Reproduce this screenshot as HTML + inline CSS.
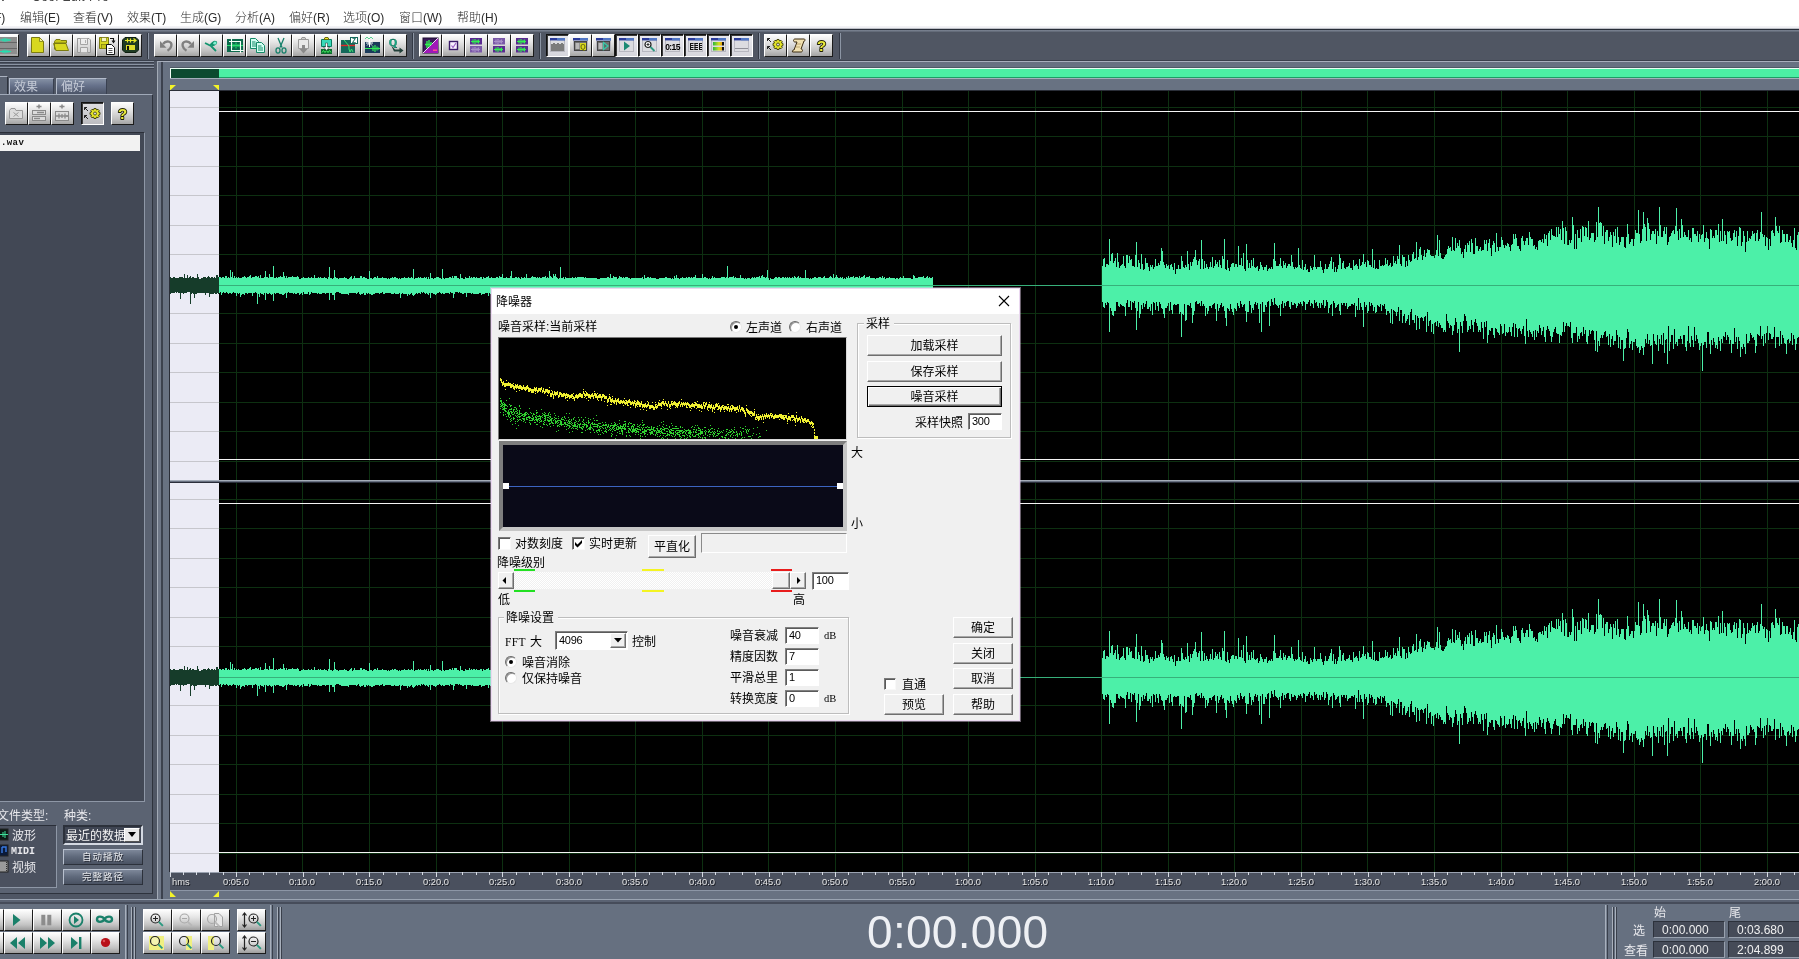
<!DOCTYPE html>
<html lang="zh-CN"><head><meta charset="utf-8"><title>Cool Edit Pro</title>
<style>
*{box-sizing:border-box;margin:0;padding:0}
html,body{width:1799px;height:959px;overflow:hidden;background:#505663}
body{position:relative;font-family:"Liberation Sans","Noto Sans CJK SC",sans-serif;font-size:12px;color:#000}
.a{position:absolute}
span,.btn,.inp,.tbox,text{will-change:transform}
#menubar{left:0;top:0;width:1799px;height:29px;background:#fff}
#menubar span{position:absolute;top:10px;font-size:12px;line-height:16px;color:#2a2a2a;white-space:nowrap;font-weight:300}
#toolbar{left:0;top:29px;width:1799px;height:32px;background:#505663;border-top:1px solid #272c37}
.tb{position:absolute;width:23px;height:23px;background:linear-gradient(180deg,#fdfdfd 0%,#e4e4e4 35%,#c2c2c2 75%,#a4a4a4 100%);border:1px solid;border-color:#fff #1c1c1c #1c1c1c #fff}
.tb.p{background:linear-gradient(180deg,#eaeaf0 0%,#d6d6dc 100%);border-color:#101010 #fff #fff #101010;box-shadow:inset 1px 1px 0 #3a3a3a}
.tb svg{position:absolute;left:0;top:0;width:21px;height:21px;will-change:transform}
.vsep{position:absolute;width:2px;border-left:1px solid #333945;border-right:1px solid #8c95a4}
.lt{color:#e8e8ec;white-space:nowrap}
#dlg{left:491px;top:288px;width:529px;height:433px;background:#f0f0f0;border:1px solid #ead8f0;box-shadow:0 0 0 1px rgba(236,214,242,.45);font-size:12px;line-height:12px}
#dlg .t{position:absolute;white-space:nowrap;font-size:12px;line-height:14px;color:#000}
.btn{position:absolute;background:#f0f0f0;border:1px solid;border-color:#fff #6e6e6e #6e6e6e #fff;box-shadow:inset -1px -1px 0 #a8a8a8;text-align:center;font-size:12px;line-height:17px;white-space:nowrap}
.inp{position:absolute;background:#fff;border:1px solid;border-color:#808080 #fff #fff #808080;box-shadow:inset 1px 1px 0 #5a5a5a;font-size:11px;line-height:13px;padding:1px 0 0 3px;white-space:nowrap;letter-spacing:-0.3px}
.grp{position:absolute;border:1px solid #bdbdbd;box-shadow:inset 1px 1px 0 #fff, 1px 1px 0 #fff}
.rad{position:absolute;width:12px;height:12px;border-radius:50%;background:#fff;border:1px solid;border-color:#6a6a6a #e8e8e8 #e8e8e8 #6a6a6a;box-shadow:inset 1px 1px 0 #9a9a9a}
.rad.on:after{content:"";position:absolute;left:3px;top:3px;width:4px;height:4px;border-radius:50%;background:#000}
.chk{position:absolute;width:13px;height:13px;background:#fff;border:1px solid;border-color:#7a7a7a #f8f8f8 #f8f8f8 #7a7a7a;box-shadow:inset 1px 1px 0 #5a5a5a}
.bb{position:absolute;width:29px;height:22px;background:linear-gradient(180deg,#fdfdfd 0%,#e6e6e6 35%,#c2c2c2 75%,#9e9e9e 100%);border:1px solid;border-color:#fff #1c1c1c #1c1c1c #fff}
.bb svg{position:absolute;left:0;top:0;width:26px;height:20px}
.tbox{position:absolute;height:17px;background:#454b58;border:1px solid;border-color:#2c313b #98a1ae #98a1ae #2c313b;color:#f0f0f0;font-size:12px;line-height:16px;padding-left:8px;white-space:nowrap}
</style></head><body>
<div class="a" id="menubar"><span style="left:0px;top:-11px;font-size:12px;color:#444">v</span><span style="left:32px;top:-11px;font-size:12px;color:#444;letter-spacing:0.5px">Cool Edit Pro</span><span style="left:-34px">文件(F)</span><span style="left:20px">编辑(E)</span><span style="left:73px">查看(V)</span><span style="left:127px">效果(T)</span><span style="left:180px">生成(G)</span><span style="left:235px">分析(A)</span><span style="left:289px">偏好(R)</span><span style="left:343px">选项(O)</span><span style="left:399px">窗口(W)</span><span style="left:457px">帮助(H)</span><div class="a" style="left:0;top:26px;width:1799px;height:3px;background:linear-gradient(180deg,#f4f4f7,#eeeef2 60%,#9a9ea8)"></div></div>
<div class="a" id="toolbar"><div class="a" style="left:0;top:0;width:1799px;height:2px;background:linear-gradient(180deg,#7e8696,#5c6371)"></div><div class="tb" style="left:-4px;top:4px"><svg viewBox="0 0 21 21"><rect x="0" y="2" width="20" height="17" fill="#8e8e8e"/><path d="M0 7.5H20M0 13.5H20" stroke="#666" stroke-width="1"/><path d="M3 5H14M6 3.5V6.5M8 3V7M10 3.5V6.5M12 4V6" stroke="#22e0b0" stroke-width="1.2"/><path d="M3 16.5H14M6 15V18M8 14.5V18.5M10 15V18M12 15.5V17.5" stroke="#22e0b0" stroke-width="1.2"/></svg></div><div class="tb" style="left:27px;top:4px"><svg viewBox="0 0 21 21"><path d="M3.5 2.5H11.5L15.5 6.5V17.5H3.5Z" fill="#d8d820" stroke="#7c7c10"/><path d="M11.5 2.5V6.5H15.5Z" fill="#f4f4a0" stroke="#7c7c10" stroke-width=".8"/></svg></div><div class="tb" style="left:50px;top:4px"><svg viewBox="0 0 21 21"><path d="M3.5 6.5L5 4.5H9L10 5.5H15.5V8H3.5Z" fill="#c8c818" stroke="#7c7c10"/><path d="M2.5 8.5H15L17.5 15.5H5Z" fill="#d8d820" stroke="#7c7c10"/><path d="M3.5 8V14L5 15.5" fill="none" stroke="#7c7c10"/></svg></div><div class="tb" style="left:73px;top:4px"><svg viewBox="0 0 21 21"><path d="M3.500 3.500H15L16.500 5V17.500H3.500Z" fill="#e6e6e6" fill-opacity=".5" stroke="#9a9a9a"/><path d="M6.500 3.500V9.500H13.500V3.500M6.500 17.500V12.500H13.500V17.500" fill="#f2f2f2" fill-opacity=".6" stroke="#a4a4a4"/><path d="M11.500 5V8" stroke="#b0b0b0"/></svg></div><div class="tb" style="left:96px;top:4px"><svg viewBox="0 0 21 21"><path d="M2.5 2.5H11.5V13.5H2.5Z" fill="#d8d820" stroke="#7c7c10"/><rect x="4.5" y="2.5" width="5" height="4" fill="#f4f4c0" stroke="#7c7c10" stroke-width=".7"/><rect x="4.5" y="9.500" width="5" height="4" fill="#c4c418" stroke="#7c7c10" stroke-width=".7"/><path d="M9.500 9.500H14.5L17.500 12.500V19.500H9.500Z" fill="#fff" stroke="#111"/><path d="M11.5 13.500H15.5M11.5 15.500H15.5M11.5 17.500H15.5" stroke="#555"/><path d="M13 3.5H16.500V7M15 5.500L16.500 7.500L18 5.500" fill="none" stroke="#111" stroke-width="1.100"/></svg></div><div class="tb" style="left:119px;top:4px"><svg viewBox="0 0 21 21"><path d="M5 2.500H16L18.500 5V15L16 17.500H5L2.500 15V5Z" fill="#1e3a22" stroke="#0e1e10"/><path d="M5 5.500H16M13.500 3.500L16 5.500L13.500 7.500M7.500 3.500V7.500M10.500 3.500V7.500" stroke="#e8e828" stroke-width="1.200" fill="none"/><rect x="6" y="10" width="9" height="5" fill="#dcdc28"/><rect x="7" y="11" width="2" height="4" fill="#111"/></svg></div><div class="tb" style="left:154px;top:4px"><svg viewBox="0 0 21 21"><g><path d="M5 6V12.700H11.500Z" fill="#808080"/><path d="M8 9C11 5 17.500 6 16.300 11C15.800 13.200 14.300 14.800 12.500 15.800" fill="none" stroke="#808080" stroke-width="2.400"/></g></svg></div><div class="tb" style="left:177px;top:4px"><svg viewBox="0 0 21 21"><g transform="translate(21,0) scale(-1,1)"><path d="M5 6V12.700H11.500Z" fill="#808080"/><path d="M8 9C11 5 17.500 6 16.300 11C15.800 13.200 14.300 14.800 12.500 15.800" fill="none" stroke="#808080" stroke-width="2.400"/></g></svg></div><div class="tb" style="left:200px;top:4px"><svg viewBox="0 0 21 21"><path d="M4 8L10 11L15 16M9 11C11 8 13 6 15 7C16 8 14 10 11 10.500" fill="none" stroke="#12946e" stroke-width="1.800"/><circle cx="14" cy="8" r="1.600" fill="#7ef0d0"/></svg></div><div class="tb" style="left:223px;top:4px"><svg viewBox="0 0 21 21"><rect x="3" y="4" width="16" height="13" fill="#0c6a4c"/><path d="M3 10.500H19M8 8V13M10 9V12M12 7.500V13.500M14 9V12M16 8.500V12.500" stroke="#28e070" stroke-width="1"/><path d="M7.500 2V15.500H20M5 6.500H16.500V18" fill="none" stroke="#f4fff8" stroke-width="1.100"/></svg></div><div class="tb" style="left:246px;top:4px"><svg viewBox="0 0 21 21"><path d="M3.5 3.5H8.5L11.5 6.5V13.5H3.5Z" fill="#d4fff2" stroke="#148a68"/><path d="M5 7H8.5M5 9H10M5 11H10" stroke="#148a68"/><path d="M9.5 7.5H14.5L17.5 10.5V17.5H9.5Z" fill="#d4fff2" stroke="#148a68"/><path d="M11 11H14.5M11 13H16M11 15H16" stroke="#148a68"/></svg></div><div class="tb" style="left:269px;top:4px"><svg viewBox="0 0 21 21"><path d="M8 3L12 12.500M14 3L10 12.500" stroke="#16806a" stroke-width="1.300" fill="none"/><ellipse cx="8" cy="15.500" rx="2" ry="2.600" fill="none" stroke="#16806a" stroke-width="1.300"/><ellipse cx="14" cy="15.500" rx="2" ry="2.600" fill="none" stroke="#16806a" stroke-width="1.300"/></svg></div><div class="tb" style="left:292px;top:4px"><svg viewBox="0 0 21 21"><path d="M5.500 4.500H15.500V13.500H5.500Z" fill="#e8e8e8" stroke="#9a9a9a"/><path d="M8 4.500L9 2.500H12L13 4.500Z" fill="#d0d0d0" stroke="#9a9a9a"/><path d="M9 10H12V14H14.500L10.500 18.500L6.500 14H9Z" fill="#8a8a8a"/></svg></div><div class="tb" style="left:315px;top:4px"><svg viewBox="0 0 21 21"><path d="M5.500 4.500H15.500V11.500H5.500Z" fill="#38d8b8" stroke="#0c7a60"/><path d="M8 4.500L9 2.500H12L13 4.500Z" fill="#e8e828" stroke="#6a6a10"/><rect x="5" y="14" width="11" height="5" fill="#0c6a2c"/><path d="M6 17.500L7.500 15.500L9 17.500L10.500 15.500L12 17.500L13.500 15.500L15 17.500" fill="none" stroke="#40f060" stroke-width="1"/><path d="M9.500 8H11.500V12H13.500L10.500 15.500L7.500 12H9.500Z" fill="#fff" stroke="#222" stroke-width=".5"/></svg></div><div class="tb" style="left:338px;top:4px"><svg viewBox="0 0 21 21"><rect x="2" y="5" width="14" height="13" fill="#14685a"/><path d="M2 10.500H16" stroke="#e02828" stroke-width="1.400"/><path d="M5 5L10 11V14L11 17L12.500 14L14 17" fill="none" stroke="#40e070" stroke-width="1"/><rect x="11.500" y="2.500" width="7" height="6" fill="#fff" stroke="#14685a"/><text x="15" y="7.800" font-size="6.500" font-weight="bold" font-family="Liberation Sans,sans-serif" text-anchor="middle" fill="#14685a">Z</text></svg></div><div class="tb" style="left:361px;top:4px"><svg viewBox="0 0 21 21"><rect x="3" y="7" width="15" height="11" fill="#1a3a5a"/><path d="M3 13.500H18M11 11V16M13 10V17M15 11.500V15.500M16.500 12.500V14.500" stroke="#30e858" stroke-width="1.200"/><path d="M7.500 4V12M4 8H11M5 5.500L10 10.500M10 5.500L5 10.500" stroke="#fff" stroke-width="1"/><path d="M3 4L5 2L7 4L9 2L11 4" fill="none" stroke="#30c878" stroke-width=".8"/></svg></div><div class="tb" style="left:384px;top:4px"><svg viewBox="0 0 21 21"><text x="8" y="10.500" font-size="11" font-weight="bold" font-family="Liberation Serif,serif" text-anchor="middle" fill="#18b088" stroke="#0c6a54" stroke-width=".4">Q</text><path d="M6 10L10 14.500H14.500V12.500L18.500 15.500L14.500 18.500V16.500H9Z" fill="#22403a"/></svg></div><div class="tb" style="left:419px;top:4px"><svg viewBox="0 0 21 21"><rect x="3" y="3" width="15" height="15" fill="#3a1a5a" stroke="#1c0c30"/><path d="M18 3V18H3Z" fill="#a018b8"/><path d="M3 18L18 3" stroke="#f0d8f8" stroke-width="1"/><path d="M5 9.500H11M7 6V13M9 5V12M11 7V10" stroke="#30f050" stroke-width="1.400"/><rect x="13" y="14.500" width="4" height="1.500" fill="#ff5090"/></svg></div><div class="tb" style="left:442px;top:4px"><svg viewBox="0 0 21 21"><rect x="6.500" y="6.500" width="8" height="8" fill="#f8f0ff" stroke="#3a1a6a" stroke-width="1.400"/><path d="M8.500 10.500L10 12.500L13 8" fill="none" stroke="#9a60c8" stroke-width="1.200"/></svg></div><div class="tb" style="left:465px;top:4px"><svg viewBox="0 0 21 21"><rect x="4" y="3" width="12" height="6.500" fill="#5a2a90"/><rect x="4" y="11" width="12" height="6.500" fill="#7a58a8"/><path d="M5 6.5h9M7 4.5v4M9 4v5M11 5v3M12.5 4.5v4" stroke="#30f050" stroke-width="1.200"/><path d="M5 14.5h9M7 12.5v4M9 12v5M11 13v3M12.5 12.5v4" stroke="#a890c8" stroke-width="1.200"/></svg></div><div class="tb" style="left:488px;top:4px"><svg viewBox="0 0 21 21"><rect x="4" y="3" width="12" height="6.500" fill="#7a58a8"/><rect x="4" y="11" width="12" height="6.500" fill="#5a2a90"/><path d="M5 6.5h9M7 4.5v4M9 4v5M11 5v3M12.5 4.5v4" stroke="#a890c8" stroke-width="1.200"/><path d="M5 14.5h9M7 12.5v4M9 12v5M11 13v3M12.5 12.5v4" stroke="#30f050" stroke-width="1.200"/></svg></div><div class="tb" style="left:511px;top:4px"><svg viewBox="0 0 21 21"><rect x="4" y="3" width="12" height="6.500" fill="#5a2a90"/><rect x="4" y="11" width="12" height="6.500" fill="#5a2a90"/><path d="M5 6.5h9M7 4.5v4M9 4v5M11 5v3M12.5 4.5v4" stroke="#30f050" stroke-width="1.200"/><path d="M5 14.5h9M7 12.5v4M9 12v5M11 13v3M12.5 12.5v4" stroke="#30f050" stroke-width="1.200"/></svg></div><div class="tb p" style="left:546px;top:4px"><svg viewBox="0 0 21 21"><rect x="3.500" y="3.500" width="14" height="13" fill="#dcdce0" stroke="#b8b8c0"/><rect x="3" y="3" width="15" height="2.400" fill="#2a3a9a"/><rect x="10" y="3" width="8" height="2.400" fill="#5a86d0" opacity=".8"/><path d="M4 16V9H6V8H8V9H10V8H12V9H14V8H16V9H17V16Z" fill="#7c7c7c"/></svg></div><div class="tb" style="left:569px;top:4px"><svg viewBox="0 0 21 21"><rect x="3.500" y="3.500" width="14" height="13" fill="#dcdce0" stroke="#b8b8c0"/><rect x="3" y="3" width="15" height="2.400" fill="#2a3a9a"/><rect x="10" y="3" width="8" height="2.400" fill="#5a86d0" opacity=".8"/><rect x="4.500" y="6.500" width="12" height="9" fill="#707070" stroke="#444"/><path d="M5.500 9H9.500M5.500 11H9.500M5.500 13H9.500" stroke="#fff" stroke-width="1.200"/><rect x="10" y="8" width="6" height="7" fill="#d8d820"/><text x="13" y="14" font-size="7" font-weight="bold" font-family="Liberation Sans,sans-serif" text-anchor="middle" fill="#6a6a10">Q</text></svg></div><div class="tb" style="left:592px;top:4px"><svg viewBox="0 0 21 21"><rect x="3.500" y="3.500" width="14" height="13" fill="#dcdce0" stroke="#b8b8c0"/><rect x="3" y="3" width="15" height="2.400" fill="#2a3a9a"/><rect x="10" y="3" width="8" height="2.400" fill="#5a86d0" opacity=".8"/><rect x="4.500" y="6.500" width="12" height="9" fill="#707070" stroke="#444"/><path d="M5.500 9H9.500M5.500 11H9.500M5.500 13H9.500" stroke="#fff" stroke-width="1.200"/><path d="M10.500 7.500L15 11L10.500 14.500Z" fill="#5a6a68" stroke="#38c8a8" stroke-width="1.200"/></svg></div><div class="tb p" style="left:615px;top:4px"><svg viewBox="0 0 21 21"><rect x="3.500" y="3.500" width="14" height="13" fill="#dcdce0" stroke="#b8b8c0"/><rect x="3" y="3" width="15" height="2.400" fill="#2a3a9a"/><rect x="10" y="3" width="8" height="2.400" fill="#5a86d0" opacity=".8"/><path d="M8 6.500L14 11L8 15.500Z" fill="#1c8a74"/></svg></div><div class="tb p" style="left:638px;top:4px"><svg viewBox="0 0 21 21"><rect x="3.500" y="3.500" width="14" height="13" fill="#dcdce0" stroke="#b8b8c0"/><rect x="3" y="3" width="15" height="2.400" fill="#2a3a9a"/><rect x="10" y="3" width="8" height="2.400" fill="#5a86d0" opacity=".8"/><circle cx="9" cy="9.500" r="3" fill="#fff" stroke="#222" stroke-width="1.200"/><path d="M7.500 9.500H10.500M9 8V11" stroke="#222" stroke-width=".9"/><path d="M11.500 12L15.500 16" stroke="#2a9a80" stroke-width="1.800"/></svg></div><div class="tb p" style="left:661px;top:4px"><svg viewBox="0 0 21 21"><rect x="3.500" y="3.500" width="14" height="13" fill="#dcdce0" stroke="#b8b8c0"/><rect x="3" y="3" width="15" height="2.400" fill="#2a3a9a"/><rect x="10" y="3" width="8" height="2.400" fill="#5a86d0" opacity=".8"/><text x="10.500" y="14.500" font-size="8.500" font-weight="bold" font-family="Liberation Sans,sans-serif" text-anchor="middle" fill="#000" letter-spacing="-0.6">0:15</text></svg></div><div class="tb p" style="left:684px;top:4px"><svg viewBox="0 0 21 21"><rect x="3.500" y="3.500" width="14" height="13" fill="#dcdce0" stroke="#b8b8c0"/><rect x="3" y="3" width="15" height="2.400" fill="#2a3a9a"/><rect x="10" y="3" width="8" height="2.400" fill="#5a86d0" opacity=".8"/><path d="M5 8.500H8.500M5 10.500H8.500M5 12.500H8.500M5 14.500H8.500M9.500 8.500H13M9.500 10.500H13M9.500 12.500H13M9.500 14.500H13M14 8.500H17M14 10.500H17M14 12.500H17M14 14.500H17" stroke="#111" stroke-width="1.100"/><path d="M5.500 8V15M10 8V15M14.500 8V15" stroke="#111" stroke-width="1"/></svg></div><div class="tb p" style="left:707px;top:4px"><svg viewBox="0 0 21 21"><rect x="3.500" y="3.500" width="14" height="13" fill="#dcdce0" stroke="#b8b8c0"/><rect x="3" y="3" width="15" height="2.400" fill="#2a3a9a"/><rect x="10" y="3" width="8" height="2.400" fill="#5a86d0" opacity=".8"/><defs><linearGradient id="gb"><stop offset="0" stop-color="#28b838"/><stop offset=".55" stop-color="#d8e020"/><stop offset=".8" stop-color="#e8a010"/><stop offset=".82" stop-color="#111"/><stop offset="1" stop-color="#111"/></linearGradient></defs><rect x="5" y="7" width="11" height="3.500" fill="url(#gb)"/><rect x="5" y="12" width="11" height="3.500" fill="url(#gb)"/></svg></div><div class="tb p" style="left:730px;top:4px"><svg viewBox="0 0 21 21"><rect x="3.500" y="3.500" width="14" height="13" fill="#dcdce0" stroke="#b8b8c0"/><rect x="3" y="3" width="15" height="2.400" fill="#2a3a9a"/><rect x="10" y="3" width="8" height="2.400" fill="#5a86d0" opacity=".8"/><path d="M4 13.500H17" stroke="#909098" stroke-width="1"/></svg></div><div class="tb" style="left:764px;top:4px"><svg viewBox="0 0 21 21"><path d="M2.500 3.500H5M2.500 3.500V6M2.500 3.500L6 7M2.500 11.500H5M2.500 11.500V14M2.500 11.500L6 15" stroke="#222" stroke-width="1" fill="none"/><g transform="translate(13,9.5)"><path d="M-1 -5H1L1.500 -3.500L3 -4.200L4.200 -3L3.500 -1.500L5 -1V1L3.500 1.500L4.200 3L3 4.200L1.500 3.500L1 5H-1L-1.500 3.500L-3 4.200L-4.200 3L-3.500 1.500L-5 1V-1L-3.500 -1.500L-4.200 -3L-3 -4.200L-1.500 -3.500Z" fill="#e4e428" stroke="#3a3a08" stroke-width=".9"/><circle r="1.500" fill="#d8d8d8" stroke="#3a3a08" stroke-width=".8"/></g></svg></div><div class="tb" style="left:787px;top:4px"><svg viewBox="0 0 21 21"><path d="M7 4C5 4 5 7 7 7H9L6 15C5 15 4 15.500 4.500 17H13C15 17 15 14 13 14L16 6C17 6 17.500 5 16.500 4Z" fill="#f0e0b0" stroke="#3a2a10" stroke-width="1"/><path d="M9 9H13M8 12H12" stroke="#b09860" stroke-width=".8"/></svg></div><div class="tb" style="left:810px;top:4px"><svg viewBox="0 0 21 21"><text x="10.5" y="16" font-size="15" font-weight="bold" font-family="Liberation Sans,sans-serif" text-anchor="middle" fill="#ecec3c" stroke="#1e1e06" stroke-width="1.800" stroke-linejoin="round" paint-order="stroke">?</text></svg></div><div class="vsep" style="left:147px;top:3px;height:26px"></div><div class="vsep" style="left:412px;top:3px;height:26px"></div><div class="vsep" style="left:539px;top:3px;height:26px"></div><div class="vsep" style="left:758px;top:3px;height:26px"></div><div class="vsep" style="left:839px;top:3px;height:26px"></div></div>
<div class="a" style="left:0px;top:60px;width:1799px;height:1px;background:#3a404c;"></div><div class="a" style="left:157px;top:61px;width:1642px;height:1px;background:#a8afbc;"></div><div class="a" style="left:162px;top:62px;width:1637px;height:29px;background:#687282;"></div><div class="a" style="left:157px;top:61px;width:1px;height:838px;background:#a2aab6;"></div><div class="a" style="left:158px;top:62px;width:3px;height:837px;background:#6e7787;"></div><div class="a" style="left:161px;top:62px;width:2px;height:837px;background:#3c424e;"></div><div class="a" style="left:163px;top:62px;width:7px;height:837px;background:#687282;"></div><div class="a" style="left:170px;top:67px;width:1629px;height:1px;background:#4f5866;"></div><div class="a" style="left:170px;top:68px;width:1629px;height:11px;background:#4cefa4;border-top:1px solid #e8fff4;border-bottom:1px solid #a4aebb"></div><div class="a" style="left:171px;top:77px;width:1628px;height:1px;background:#1f9c66;"></div><div class="a" style="left:170px;top:68px;width:1px;height:10px;background:#f4fff8;"></div><div class="a" style="left:171px;top:69px;width:48px;height:9px;background:#0c4a30;"></div><svg class="a" style="left:170px;top:84px" width="50" height="7"><path d="M0 1H6L0 6.500Z M43 1H49V6.500Z" fill="#f4f428"/><path d="M0 6.5H49" stroke="#2a2e38" stroke-width="1"/></svg><div class="a" style="left:169px;top:90px;width:1630px;height:1px;background:#2a2e38;"></div><div class="a" style="left:169px;top:90px;width:1px;height:782px;background:#2a2e38;"></div><svg class="a" style="left:0;top:0" width="1799" height="959" viewBox="0 0 1799 959" shape-rendering="crispEdges"><rect x="170" y="91" width="1629" height="781" fill="#000"/><rect x="170" y="91" width="49" height="781" fill="#ebebf5"/><path d="M219 107.5H1799M219 136.5H1799M219 166.5H1799M219 195.5H1799M219 225.5H1799M219 254.5H1799M219 313.5H1799M219 343.5H1799M219 372.5H1799M219 402.5H1799M219 431.5H1799M219 461.5H1799M219 499.5H1799M219 528.5H1799M219 558.5H1799M219 587.5H1799M219 617.5H1799M219 646.5H1799M219 705.5H1799M219 735.5H1799M219 764.5H1799M219 794.5H1799M219 823.5H1799M219 853.5H1799M236.5 91V872M302.5 91V872M369.5 91V872M436.5 91V872M502.5 91V872M569.5 91V872M635.5 91V872M702.5 91V872M768.5 91V872M835.5 91V872M902.5 91V872M968.5 91V872M1035.5 91V872M1101.5 91V872M1168.5 91V872M1234.5 91V872M1301.5 91V872M1367.5 91V872M1434.5 91V872M1501.5 91V872M1567.5 91V872M1634.5 91V872M1700.5 91V872M1767.5 91V872" stroke="#0d3011" stroke-width="1" fill="none"/><path d="M170 107.5H219M170 136.5H219M170 166.5H219M170 195.5H219M170 225.5H219M170 254.5H219M170 313.5H219M170 343.5H219M170 372.5H219M170 402.5H219M170 431.5H219M170 461.5H219M170 499.5H219M170 528.5H219M170 558.5H219M170 587.5H219M170 617.5H219M170 646.5H219M170 705.5H219M170 735.5H219M170 764.5H219M170 794.5H219M170 823.5H219M170 853.5H219" stroke="#c6c6cc" stroke-width="1" fill="none"/><path d="M219 111.5H1799M219 459.5H1799M219 503.5H1799M219 852.5H1799" stroke="#f4f4f4" stroke-width="1"/><rect x="170" y="480" width="1629" height="1" fill="#a4acb8"/><rect x="170" y="481" width="1629" height="1" fill="#687080"/><rect x="170" y="482" width="1629" height="1" fill="#2a2e3a"/><path d="M170 277V294M171 278V293M172 278V293M173 277V293M174 277V293M175 278V292M176 278V293M177 278V292M178 278V293M179 277V293M180 277V299M181 277V293M182 277V293M183 278V294M184 274V293M185 278V293M186 278V293M187 275V292M188 278V292M189 277V292M190 276V304M191 278V294M192 277V293M193 277V294M194 278V298M195 278V294M196 278V294M197 274V293M198 277V293M199 279V293M200 279V293M201 278V293M202 278V293M203 277V293M204 277V293M205 277V295M206 278V293M207 277V293M208 276V293M209 277V297M210 278V294M211 277V294M212 277V294M213 278V294M214 277V293M215 278V294M216 275V294M217 275V293M218 277V294" stroke="#163c2a" stroke-width="1" transform="translate(0.5,0)"/><path d="M219 277V293M220 277V292M221 278V295M222 277V293M223 277V292M224 278V293M225 276V293M226 276V292M227 278V293M228 277V294M229 278V293M230 270V293M231 277V294M232 272V293M233 278V292M234 276V293M235 278V293M236 277V296M237 278V293M238 277V294M239 278V293M240 278V297M241 278V295M242 277V294M243 277V294M244 276V295M245 277V293M246 278V293M247 277V294M248 277V293M249 276V293M250 275V293M251 278V293M252 277V296M253 277V293M254 277V293M255 276V292M256 276V293M257 277V304M258 276V294M259 278V297M260 275V293M261 278V294M262 278V294M263 278V295M264 277V293M265 271V300M266 277V293M267 277V294M268 278V294M269 274V293M270 277V294M271 277V295M272 277V294M273 266V301M274 278V293M275 278V294M276 277V293M277 278V293M278 277V293M279 277V294M280 276V294M281 277V294M282 277V295M283 272V295M284 276V294M285 278V293M286 276V298M287 278V293M288 277V292M289 277V293M290 277V293M291 277V293M292 276V293M293 277V294M294 277V293M295 277V294M296 277V294M297 276V293M298 277V293M299 279V295M300 279V294M301 278V293M302 278V295M303 277V292M304 278V294M305 278V294M306 278V294M307 278V294M308 277V292M309 278V295M310 278V294M311 277V292M312 278V293M313 278V293M314 275V293M315 278V293M316 278V293M317 278V294M318 277V293M319 278V294M320 277V294M321 278V294M322 278V293M323 278V293M324 277V293M325 278V294M326 278V293M327 279V293M328 277V293M329 267V300M330 278V293M331 278V293M332 279V295M333 278V295M334 270V300M335 277V293M336 278V292M337 278V292M338 279V292M339 278V293M340 278V293M341 278V294M342 278V294M343 278V294M344 277V294M345 278V294M346 278V294M347 279V294M348 279V295M349 278V293M350 277V293M351 276V293M352 279V293M353 278V293M354 276V293M355 278V293M356 278V294M357 278V293M358 278V292M359 278V294M360 276V295M361 276V294M362 278V294M363 277V293M364 277V295M365 278V295M366 278V293M367 279V294M368 279V293M369 271V294M370 278V294M371 278V295M372 279V295M373 278V294M374 277V294M375 277V293M376 278V293M377 276V293M378 278V293M379 278V294M380 278V293M381 278V293M382 277V292M383 278V294M384 278V294M385 278V293M386 278V293M387 279V293M388 278V293M389 279V293M390 278V293M391 278V294M392 277V294M393 278V294M394 277V293M395 277V294M396 278V294M397 278V294M398 279V294M399 278V293M400 279V298M401 278V294M402 278V293M403 278V294M404 277V294M405 278V294M406 278V294M407 278V296M408 277V294M409 278V295M410 278V294M411 277V293M412 278V295M413 269V296M414 279V295M415 278V294M416 278V293M417 278V294M418 277V293M419 278V293M420 277V294M421 278V292M422 278V293M423 278V292M424 277V293M425 278V294M426 277V293M427 279V294M428 277V295M429 279V293M430 273V298M431 278V293M432 278V293M433 279V294M434 278V294M435 278V295M436 277V294M437 277V293M438 277V293M439 278V292M440 278V293M441 279V294M442 269V293M443 278V294M444 279V294M445 278V293M446 278V293M447 278V293M448 278V293M449 277V294M450 277V292M451 278V293M452 276V293M453 278V298M454 276V294M455 276V292M456 276V292M457 278V292M458 278V293M459 279V292M460 274V293M461 278V293M462 278V294M463 279V294M464 279V293M465 277V293M466 278V297M467 278V293M468 278V293M469 276V293M470 278V293M471 277V294M472 278V293M473 277V294M474 277V294M475 278V294M476 277V294M477 278V294M478 278V294M479 278V293M480 277V293M481 277V295M482 279V294M483 277V294M484 278V294M485 278V293M486 277V293M487 277V293M488 276V296M489 278V293M490 278V294M491 277V294M492 278V293M493 278V293M494 278V293M495 278V293M496 277V293M497 277V292M498 278V292M499 276V295M500 277V293M501 277V293M502 274V293M503 278V294M504 278V293M505 278V295M506 277V294M507 278V293M508 278V293M509 278V293M510 276V293M511 271V293M512 278V295M513 278V293M514 278V293M515 277V293M516 277V292M517 278V292M518 277V293M519 278V293M520 279V292M521 277V294M522 278V292M523 278V294M524 277V294M525 278V293M526 274V293M527 278V293M528 278V293M529 278V293M530 278V292M531 277V292M532 276V293M533 277V292M534 277V293M535 277V295M536 278V305M537 277V296M538 278V295M539 277V294M540 278V293M541 278V294M542 277V294M543 277V293M544 277V294M545 276V296M546 278V293M547 277V293M548 278V294M549 271V295M550 276V295M551 277V293M552 278V292M553 274V293M554 276V292M555 274V293M556 277V297M557 278V294M558 279V293M559 278V293M560 267V294M561 278V293M562 278V294M563 277V293M564 279V293M565 277V295M566 278V293M567 278V293M568 278V293M569 278V293M570 278V293M571 278V293M572 277V294M573 278V294M574 278V294M575 277V293M576 278V293M577 277V294M578 277V294M579 277V293M580 277V293M581 277V293M582 277V294M583 277V293M584 278V294M585 277V294M586 278V293M587 278V294M588 278V293M589 278V293M590 278V293M591 278V294M592 278V294M593 278V294M594 278V294M595 278V293M596 278V293M597 279V293M598 279V293M599 279V294M600 278V293M601 278V293M602 278V295M603 278V293M604 278V293M605 278V293M606 278V293M607 277V293M608 277V293M609 278V293M610 274V293M611 278V293M612 278V305M613 276V294M614 277V294M615 277V293M616 277V293M617 279V293M618 278V293M619 276V292M620 277V293M621 277V293M622 278V292M623 277V292M624 278V297M625 277V293M626 277V293M627 277V293M628 278V293M629 278V293M630 279V295M631 278V294M632 278V294M633 278V294M634 278V294M635 278V294M636 278V293M637 278V294M638 278V293M639 278V294M640 278V294M641 278V294M642 277V294M643 279V294M644 275V293M645 278V293M646 278V294M647 277V294M648 277V296M649 278V294M650 277V293M651 278V293M652 278V293M653 278V293M654 278V294M655 278V293M656 279V296M657 279V293M658 279V293M659 278V293M660 278V293M661 278V293M662 278V294M663 278V292M664 278V292M665 277V293M666 277V295M667 278V293M668 278V292M669 278V293M670 278V293M671 279V294M672 278V294M673 279V293M674 276V293M675 278V295M676 275V293M677 278V293M678 278V294M679 279V294M680 278V294M681 278V294M682 277V295M683 278V294M684 278V293M685 278V294M686 277V293M687 278V296M688 277V292M689 277V293M690 278V293M691 277V293M692 278V293M693 277V302M694 277V293M695 275V293M696 278V292M697 278V293M698 278V292M699 278V292M700 278V293M701 278V296M702 274V293M703 278V293M704 277V292M705 277V292M706 278V295M707 278V293M708 279V293M709 278V293M710 279V293M711 278V294M712 276V293M713 278V293M714 277V294M715 278V293M716 278V293M717 278V293M718 278V293M719 278V294M720 278V293M721 277V302M722 277V292M723 277V295M724 277V293M725 278V295M726 277V298M727 266V293M728 278V294M729 277V294M730 277V294M731 277V293M732 277V296M733 276V294M734 278V293M735 277V294M736 278V293M737 278V294M738 278V294M739 278V294M740 275V294M741 278V296M742 278V293M743 278V293M744 279V294M745 278V293M746 279V294M747 278V293M748 278V297M749 278V293M750 279V295M751 278V293M752 277V293M753 278V294M754 277V292M755 278V292M756 277V294M757 277V293M758 277V293M759 276V293M760 278V293M761 276V292M762 275V294M763 277V293M764 277V296M765 278V293M766 277V293M767 270V294M768 278V293M769 280V295M770 278V292M771 279V294M772 279V293M773 279V294M774 278V293M775 277V294M776 277V294M777 278V294M778 277V294M779 277V294M780 278V295M781 278V295M782 277V293M783 277V293M784 278V297M785 277V294M786 278V293M787 277V296M788 278V295M789 277V294M790 278V294M791 278V293M792 277V293M793 278V294M794 276V294M795 277V294M796 278V294M797 277V294M798 276V295M799 278V296M800 277V296M801 278V293M802 278V293M803 278V296M804 278V293M805 270V294M806 278V296M807 278V293M808 278V293M809 279V296M810 278V293M811 279V294M812 278V293M813 278V294M814 277V294M815 277V294M816 278V293M817 278V293M818 277V293M819 277V293M820 277V293M821 278V293M822 278V293M823 277V294M824 276V293M825 278V294M826 278V293M827 278V296M828 278V293M829 277V294M830 276V294M831 277V293M832 278V294M833 274V294M834 278V294M835 277V297M836 275V293M837 277V294M838 278V294M839 278V293M840 277V293M841 278V294M842 277V294M843 279V292M844 278V294M845 279V293M846 277V293M847 278V294M848 276V294M849 278V294M850 277V292M851 277V293M852 277V294M853 276V293M854 278V295M855 277V295M856 277V293M857 277V293M858 278V294M859 276V293M860 278V294M861 277V294M862 277V295M863 276V293M864 275V293M865 278V293M866 277V294M867 277V293M868 277V293M869 276V297M870 278V293M871 278V294M872 278V294M873 278V293M874 278V293M875 279V294M876 278V294M877 278V293M878 278V296M879 277V293M880 277V292M881 278V294M882 276V292M883 278V293M884 277V293M885 279V294M886 278V294M887 278V301M888 278V293M889 277V293M890 278V293M891 278V293M892 278V293M893 278V297M894 278V298M895 279V292M896 278V294M897 278V293M898 279V293M899 278V292M900 277V293M901 278V294M902 278V293M903 276V293M904 278V293M905 278V292M906 278V293M907 278V293M908 278V293M909 278V293M910 278V295M911 279V293M912 279V293M913 275V293M914 276V294M915 278V294M916 278V293M917 278V293M918 277V302M919 277V293M920 277V293M921 277V293M922 277V293M923 276V292M924 278V293M925 278V293M926 277V292M927 276V295M928 278V293M929 277V294M930 278V294M931 278V295M932 277V293M1102 266V302M1103 259V307M1104 258V308M1105 267V303M1106 264V305M1107 264V302M1108 265V303M1109 239V332M1110 261V308M1111 254V311M1112 253V315M1113 263V316M1114 261V311M1115 258V311M1116 267V302M1117 253V302M1118 262V306M1119 268V307M1120 266V304M1121 265V305M1122 264V306M1123 256V306M1124 266V307M1125 268V316M1126 255V303M1127 255V300M1128 263V307M1129 256V307M1130 260V301M1131 259V310M1132 266V302M1133 266V303M1134 267V301M1135 255V308M1136 242V330M1137 267V311M1138 260V302M1139 263V318M1140 269V314M1141 254V305M1142 264V309M1143 270V303M1144 269V307M1145 258V304M1146 263V301M1147 263V309M1148 267V309M1149 271V307M1150 265V311M1151 267V304M1152 265V315M1153 269V302M1154 267V303M1155 259V310M1156 266V302M1157 266V306M1158 263V311M1159 265V302M1160 261V304M1161 248V308M1162 251V309M1163 262V314M1164 265V318M1165 268V308M1166 264V308M1167 266V306M1168 265V303M1169 269V311M1170 265V302M1171 264V310M1172 267V314M1173 270V305M1174 263V304M1175 274V305M1176 269V305M1177 269V304M1178 265V304M1179 269V314M1180 269V312M1181 256V337M1182 261V314M1183 267V315M1184 268V304M1185 265V321M1186 267V320M1187 251V305M1188 264V305M1189 270V306M1190 262V303M1191 266V308M1192 262V323M1193 259V315M1194 257V311M1195 250V302M1196 260V301M1197 265V304M1198 261V304M1199 259V303M1200 269V306M1201 240V301M1202 259V306M1203 269V304M1204 261V306M1205 268V316M1206 264V308M1207 267V314M1208 269V311M1209 267V306M1210 262V306M1211 267V308M1212 257V305M1213 268V304M1214 266V303M1215 260V309M1216 264V321M1217 262V304M1218 267V311M1219 260V308M1220 265V305M1221 268V303M1222 256V307M1223 259V306M1224 239V311M1225 269V318M1226 270V326M1227 260V308M1228 268V309M1229 271V311M1230 267V304M1231 264V309M1232 263V312M1233 263V315M1234 267V308M1235 264V309M1236 264V311M1237 267V303M1238 246V306M1239 265V308M1240 265V301M1241 258V304M1242 266V307M1243 253V305M1244 269V304M1245 271V311M1246 244V322M1247 260V312M1248 268V312M1249 263V301M1250 268V305M1251 260V313M1252 266V308M1253 258V310M1254 267V304M1255 268V302M1256 267V305M1257 266V303M1258 271V309M1259 269V323M1260 262V304M1261 265V332M1262 267V302M1263 270V312M1264 267V312M1265 267V305M1266 265V307M1267 271V302M1268 269V301M1269 268V326M1270 269V306M1271 267V299M1272 269V302M1273 259V305M1274 243V298M1275 261V304M1276 266V305M1277 266V306M1278 266V308M1279 264V305M1280 258V316M1281 266V304M1282 268V301M1283 261V308M1284 265V303M1285 263V306M1286 268V302M1287 266V301M1288 264V301M1289 264V307M1290 266V309M1291 255V302M1292 262V305M1293 267V305M1294 269V303M1295 267V304M1296 268V308M1297 267V306M1298 248V303M1299 265V304M1300 268V302M1301 269V304M1302 260V306M1303 270V301M1304 267V302M1305 264V310M1306 270V304M1307 269V304M1308 272V302M1309 272V300M1310 266V306M1311 268V303M1312 270V304M1313 267V308M1314 255V300M1315 267V303M1316 269V302M1317 267V306M1318 267V308M1319 267V303M1320 261V308M1321 267V303M1322 270V305M1323 273V300M1324 269V308M1325 264V306M1326 269V300M1327 269V302M1328 267V313M1329 264V308M1330 261V305M1331 257V304M1332 269V316M1333 262V301M1334 272V303M1335 267V308M1336 272V307M1337 269V305M1338 265V304M1339 254V311M1340 258V315M1341 269V303M1342 263V305M1343 261V303M1344 268V303M1345 269V306M1346 267V303M1347 267V309M1348 266V307M1349 263V306M1350 268V306M1351 268V304M1352 270V304M1353 260V305M1354 266V303M1355 265V317M1356 264V306M1357 266V310M1358 269V298M1359 259V310M1360 266V303M1361 265V307M1362 262V310M1363 254V327M1364 264V302M1365 262V307M1366 267V305M1367 260V313M1368 261V311M1369 265V302M1370 265V306M1371 267V303M1372 249V305M1373 268V311M1374 260V307M1375 269V313M1376 268V312M1377 269V305M1378 269V306M1379 260V307M1380 266V304M1381 266V311M1382 265V305M1383 266V306M1384 265V304M1385 258V309M1386 264V315M1387 260V311M1388 266V311M1389 265V313M1390 263V323M1391 267V309M1392 266V324M1393 256V310M1394 263V311M1395 261V312M1396 264V316M1397 256V312M1398 259V307M1399 245V321M1400 264V310M1401 266V310M1402 255V323M1403 257V316M1404 257V314M1405 267V323M1406 261V321M1407 266V319M1408 255V315M1409 260V325M1410 262V312M1411 261V309M1412 254V320M1413 252V320M1414 259V323M1415 258V315M1416 242V330M1417 260V316M1418 257V318M1419 249V329M1420 247V318M1421 255V317M1422 260V318M1423 256V321M1424 250V317M1425 257V316M1426 253V332M1427 249V312M1428 250V326M1429 250V321M1430 255V320M1431 256V332M1432 256V324M1433 256V334M1434 258V323M1435 255V322M1436 250V326M1437 235V321M1438 256V327M1439 240V323M1440 253V325M1441 258V328M1442 259V328M1443 259V332M1444 257V330M1445 255V332M1446 254V314M1447 249V321M1448 246V323M1449 248V328M1450 247V325M1451 251V326M1452 237V335M1453 250V331M1454 251V325M1455 238V318M1456 248V322M1457 243V333M1458 246V329M1459 240V352M1460 248V322M1461 254V326M1462 252V333M1463 258V321M1464 249V314M1465 245V316M1466 252V321M1467 243V332M1468 245V330M1469 241V326M1470 252V329M1471 239V320M1472 243V325M1473 254V332M1474 254V322M1475 238V319M1476 246V323M1477 246V326M1478 251V332M1479 249V330M1480 247V332M1481 251V322M1482 250V328M1483 250V339M1484 240V322M1485 244V327M1486 240V321M1487 251V343M1488 243V335M1489 239V330M1490 248V331M1491 256V328M1492 245V328M1493 241V335M1494 243V338M1495 252V328M1496 233V329M1497 247V332M1498 251V333M1499 247V335M1500 247V324M1501 237V326M1502 240V334M1503 245V333M1504 248V324M1505 245V336M1506 246V332M1507 243V333M1508 244V332M1509 247V327M1510 251V332M1511 245V336M1512 244V327M1513 234V323M1514 239V337M1515 234V324M1516 238V328M1517 246V337M1518 246V329M1519 249V328M1520 251V331M1521 238V334M1522 236V329M1523 241V326M1524 245V336M1525 241V344M1526 238V319M1527 238V331M1528 245V337M1529 232V330M1530 237V332M1531 239V334M1532 239V337M1533 246V331M1534 245V340M1535 249V330M1536 247V337M1537 250V331M1538 241V333M1539 240V325M1540 240V328M1541 242V335M1542 239V331M1543 243V327M1544 234V337M1545 239V342M1546 235V330M1547 246V326M1548 233V329M1549 231V331M1550 240V336M1551 229V342M1552 235V337M1553 236V332M1554 236V329M1555 237V327M1556 227V333M1557 237V334M1558 227V334M1559 234V343M1560 229V335M1561 240V336M1562 221V332M1563 228V322M1564 244V332M1565 227V326M1566 231V323M1567 245V326M1568 245V326M1569 240V327M1570 243V322M1571 240V338M1572 217V343M1573 225V333M1574 249V333M1575 234V333M1576 249V327M1577 230V342M1578 238V336M1579 238V339M1580 229V333M1581 242V332M1582 226V336M1583 227V327M1584 236V334M1585 227V330M1586 228V342M1587 237V344M1588 221V336M1589 240V330M1590 238V334M1591 233V331M1592 233V330M1593 233V331M1594 242V340M1595 240V351M1596 222V331M1597 237V352M1598 207V341M1599 223V346M1600 222V338M1601 223V335M1602 236V338M1603 226V335M1604 244V332M1605 232V331M1606 230V337M1607 230V336M1608 241V345M1609 237V334M1610 232V347M1611 235V339M1612 247V336M1613 232V345M1614 236V341M1615 229V341M1616 243V330M1617 227V335M1618 237V348M1619 245V337M1620 242V349M1621 237V340M1622 237V340M1623 237V361M1624 247V349M1625 248V348M1626 237V338M1627 224V329M1628 234V332M1629 244V348M1630 242V344M1631 239V341M1632 239V350M1633 246V342M1634 239V342M1635 230V339M1636 233V346M1637 233V348M1638 210V347M1639 234V353M1640 243V350M1641 241V346M1642 229V348M1643 212V355M1644 224V347M1645 227V339M1646 241V343M1647 218V334M1648 223V344M1649 229V340M1650 240V346M1651 234V345M1652 231V364M1653 231V334M1654 234V341M1655 229V344M1656 244V345M1657 231V335M1658 236V351M1659 207V339M1660 225V344M1661 237V335M1662 237V345M1663 231V333M1664 227V353M1665 234V340M1666 227V339M1667 245V364M1668 242V326M1669 237V351M1670 236V342M1671 233V335M1672 231V335M1673 230V349M1674 234V329M1675 226V344M1676 208V342M1677 231V346M1678 240V339M1679 229V339M1680 238V336M1681 219V339M1682 225V344M1683 237V335M1684 232V335M1685 235V347M1686 237V351M1687 237V341M1688 230V326M1689 240V343M1690 238V347M1691 242V336M1692 228V340M1693 228V347M1694 234V327M1695 234V341M1696 236V335M1697 231V339M1698 242V343M1699 234V350M1700 239V346M1701 235V343M1702 234V371M1703 225V345M1704 242V342M1705 238V342M1706 232V348M1707 238V332M1708 239V332M1709 249V344M1710 229V354M1711 230V340M1712 238V345M1713 236V338M1714 238V342M1715 230V348M1716 230V345M1717 235V349M1718 224V337M1719 242V341M1720 231V351M1721 241V339M1722 219V343M1723 241V336M1724 231V337M1725 235V332M1726 244V340M1727 231V335M1728 232V337M1729 231V344M1730 238V340M1731 241V353M1732 240V344M1733 233V344M1734 230V328M1735 237V342M1736 231V337M1737 246V349M1738 236V337M1739 227V341M1740 228V357M1741 246V347M1742 242V349M1743 231V344M1744 236V347M1745 252V354M1746 242V334M1747 231V343M1748 241V343M1749 238V341M1750 239V333M1751 236V335M1752 231V338M1753 234V337M1754 233V340M1755 241V353M1756 233V346M1757 230V334M1758 241V335M1759 239V336M1760 232V326M1761 212V339M1762 234V336M1763 237V346M1764 235V334M1765 246V343M1766 237V333M1767 238V326M1768 250V340M1769 239V333M1770 246V334M1771 231V339M1772 230V339M1773 233V337M1774 236V327M1775 217V348M1776 226V337M1777 231V337M1778 233V337M1779 226V346M1780 243V331M1781 242V344M1782 230V335M1783 234V338M1784 234V343M1785 242V344M1786 234V354M1787 234V340M1788 242V339M1789 240V343M1790 236V341M1791 243V333M1792 247V345M1793 240V335M1794 228V339M1795 248V350M1796 250V344M1797 235V338M1798 232V337" stroke="#4cf0a8" stroke-width="1" transform="translate(0.5,0)"/><rect x="219" y="285" width="1580" height="1" fill="#37b07a"/><rect x="170" y="285" width="49" height="1" fill="#163c2a"/><path d="M170 669V686M171 670V685M172 670V685M173 669V685M174 669V685M175 670V684M176 670V685M177 670V684M178 670V685M179 669V685M180 669V691M181 669V685M182 669V685M183 670V686M184 666V685M185 670V685M186 670V685M187 667V684M188 670V684M189 669V684M190 668V696M191 670V686M192 669V685M193 669V686M194 670V690M195 670V686M196 670V686M197 666V685M198 669V685M199 671V685M200 671V685M201 670V685M202 670V685M203 669V685M204 669V685M205 669V687M206 670V685M207 669V685M208 668V685M209 669V689M210 670V686M211 669V686M212 669V686M213 670V686M214 669V685M215 670V686M216 667V686M217 667V685M218 669V686" stroke="#163c2a" stroke-width="1" transform="translate(0.5,0)"/><path d="M219 669V685M220 669V684M221 670V687M222 669V685M223 669V684M224 670V685M225 668V685M226 668V684M227 670V685M228 669V686M229 670V685M230 662V685M231 669V686M232 664V685M233 670V684M234 668V685M235 670V685M236 669V688M237 670V685M238 669V686M239 670V685M240 670V689M241 670V687M242 669V686M243 669V686M244 668V687M245 669V685M246 670V685M247 669V686M248 669V685M249 668V685M250 667V685M251 670V685M252 669V688M253 669V685M254 669V685M255 668V684M256 668V685M257 669V696M258 668V686M259 670V689M260 667V685M261 670V686M262 670V686M263 670V687M264 669V685M265 663V692M266 669V685M267 669V686M268 670V686M269 666V685M270 669V686M271 669V687M272 669V686M273 658V693M274 670V685M275 670V686M276 669V685M277 670V685M278 669V685M279 669V686M280 668V686M281 669V686M282 669V687M283 664V687M284 668V686M285 670V685M286 668V690M287 670V685M288 669V684M289 669V685M290 669V685M291 669V685M292 668V685M293 669V686M294 669V685M295 669V686M296 669V686M297 668V685M298 669V685M299 671V687M300 671V686M301 670V685M302 670V687M303 669V684M304 670V686M305 670V686M306 670V686M307 670V686M308 669V684M309 670V687M310 670V686M311 669V684M312 670V685M313 670V685M314 667V685M315 670V685M316 670V685M317 670V686M318 669V685M319 670V686M320 669V686M321 670V686M322 670V685M323 670V685M324 669V685M325 670V686M326 670V685M327 671V685M328 669V685M329 659V692M330 670V685M331 670V685M332 671V687M333 670V687M334 662V692M335 669V685M336 670V684M337 670V684M338 671V684M339 670V685M340 670V685M341 670V686M342 670V686M343 670V686M344 669V686M345 670V686M346 670V686M347 671V686M348 671V687M349 670V685M350 669V685M351 668V685M352 671V685M353 670V685M354 668V685M355 670V685M356 670V686M357 670V685M358 670V684M359 670V686M360 668V687M361 668V686M362 670V686M363 669V685M364 669V687M365 670V687M366 670V685M367 671V686M368 671V685M369 663V686M370 670V686M371 670V687M372 671V687M373 670V686M374 669V686M375 669V685M376 670V685M377 668V685M378 670V685M379 670V686M380 670V685M381 670V685M382 669V684M383 670V686M384 670V686M385 670V685M386 670V685M387 671V685M388 670V685M389 671V685M390 670V685M391 670V686M392 669V686M393 670V686M394 669V685M395 669V686M396 670V686M397 670V686M398 671V686M399 670V685M400 671V690M401 670V686M402 670V685M403 670V686M404 669V686M405 670V686M406 670V686M407 670V688M408 669V686M409 670V687M410 670V686M411 669V685M412 670V687M413 661V688M414 671V687M415 670V686M416 670V685M417 670V686M418 669V685M419 670V685M420 669V686M421 670V684M422 670V685M423 670V684M424 669V685M425 670V686M426 669V685M427 671V686M428 669V687M429 671V685M430 665V690M431 670V685M432 670V685M433 671V686M434 670V686M435 670V687M436 669V686M437 669V685M438 669V685M439 670V684M440 670V685M441 671V686M442 661V685M443 670V686M444 671V686M445 670V685M446 670V685M447 670V685M448 670V685M449 669V686M450 669V684M451 670V685M452 668V685M453 670V690M454 668V686M455 668V684M456 668V684M457 670V684M458 670V685M459 671V684M460 666V685M461 670V685M462 670V686M463 671V686M464 671V685M465 669V685M466 670V689M467 670V685M468 670V685M469 668V685M470 670V685M471 669V686M472 670V685M473 669V686M474 669V686M475 670V686M476 669V686M477 670V686M478 670V686M479 670V685M480 669V685M481 669V687M482 671V686M483 669V686M484 670V686M485 670V685M486 669V685M487 669V685M488 668V688M489 670V685M490 670V686M491 669V686M492 670V685M493 670V685M494 670V685M495 670V685M496 669V685M497 669V684M498 670V684M499 668V687M500 669V685M501 669V685M502 666V685M503 670V686M504 670V685M505 670V687M506 669V686M507 670V685M508 670V685M509 670V685M510 668V685M511 663V685M512 670V687M513 670V685M514 670V685M515 669V685M516 669V684M517 670V684M518 669V685M519 670V685M520 671V684M521 669V686M522 670V684M523 670V686M524 669V686M525 670V685M526 666V685M527 670V685M528 670V685M529 670V685M530 670V684M531 669V684M532 668V685M533 669V684M534 669V685M535 669V687M536 670V697M537 669V688M538 670V687M539 669V686M540 670V685M541 670V686M542 669V686M543 669V685M544 669V686M545 668V688M546 670V685M547 669V685M548 670V686M549 663V687M550 668V687M551 669V685M552 670V684M553 666V685M554 668V684M555 666V685M556 669V689M557 670V686M558 671V685M559 670V685M560 659V686M561 670V685M562 670V686M563 669V685M564 671V685M565 669V687M566 670V685M567 670V685M568 670V685M569 670V685M570 670V685M571 670V685M572 669V686M573 670V686M574 670V686M575 669V685M576 670V685M577 669V686M578 669V686M579 669V685M580 669V685M581 669V685M582 669V686M583 669V685M584 670V686M585 669V686M586 670V685M587 670V686M588 670V685M589 670V685M590 670V685M591 670V686M592 670V686M593 670V686M594 670V686M595 670V685M596 670V685M597 671V685M598 671V685M599 671V686M600 670V685M601 670V685M602 670V687M603 670V685M604 670V685M605 670V685M606 670V685M607 669V685M608 669V685M609 670V685M610 666V685M611 670V685M612 670V697M613 668V686M614 669V686M615 669V685M616 669V685M617 671V685M618 670V685M619 668V684M620 669V685M621 669V685M622 670V684M623 669V684M624 670V689M625 669V685M626 669V685M627 669V685M628 670V685M629 670V685M630 671V687M631 670V686M632 670V686M633 670V686M634 670V686M635 670V686M636 670V685M637 670V686M638 670V685M639 670V686M640 670V686M641 670V686M642 669V686M643 671V686M644 667V685M645 670V685M646 670V686M647 669V686M648 669V688M649 670V686M650 669V685M651 670V685M652 670V685M653 670V685M654 670V686M655 670V685M656 671V688M657 671V685M658 671V685M659 670V685M660 670V685M661 670V685M662 670V686M663 670V684M664 670V684M665 669V685M666 669V687M667 670V685M668 670V684M669 670V685M670 670V685M671 671V686M672 670V686M673 671V685M674 668V685M675 670V687M676 667V685M677 670V685M678 670V686M679 671V686M680 670V686M681 670V686M682 669V687M683 670V686M684 670V685M685 670V686M686 669V685M687 670V688M688 669V684M689 669V685M690 670V685M691 669V685M692 670V685M693 669V694M694 669V685M695 667V685M696 670V684M697 670V685M698 670V684M699 670V684M700 670V685M701 670V688M702 666V685M703 670V685M704 669V684M705 669V684M706 670V687M707 670V685M708 671V685M709 670V685M710 671V685M711 670V686M712 668V685M713 670V685M714 669V686M715 670V685M716 670V685M717 670V685M718 670V685M719 670V686M720 670V685M721 669V694M722 669V684M723 669V687M724 669V685M725 670V687M726 669V690M727 658V685M728 670V686M729 669V686M730 669V686M731 669V685M732 669V688M733 668V686M734 670V685M735 669V686M736 670V685M737 670V686M738 670V686M739 670V686M740 667V686M741 670V688M742 670V685M743 670V685M744 671V686M745 670V685M746 671V686M747 670V685M748 670V689M749 670V685M750 671V687M751 670V685M752 669V685M753 670V686M754 669V684M755 670V684M756 669V686M757 669V685M758 669V685M759 668V685M760 670V685M761 668V684M762 667V686M763 669V685M764 669V688M765 670V685M766 669V685M767 662V686M768 670V685M769 672V687M770 670V684M771 671V686M772 671V685M773 671V686M774 670V685M775 669V686M776 669V686M777 670V686M778 669V686M779 669V686M780 670V687M781 670V687M782 669V685M783 669V685M784 670V689M785 669V686M786 670V685M787 669V688M788 670V687M789 669V686M790 670V686M791 670V685M792 669V685M793 670V686M794 668V686M795 669V686M796 670V686M797 669V686M798 668V687M799 670V688M800 669V688M801 670V685M802 670V685M803 670V688M804 670V685M805 662V686M806 670V688M807 670V685M808 670V685M809 671V688M810 670V685M811 671V686M812 670V685M813 670V686M814 669V686M815 669V686M816 670V685M817 670V685M818 669V685M819 669V685M820 669V685M821 670V685M822 670V685M823 669V686M824 668V685M825 670V686M826 670V685M827 670V688M828 670V685M829 669V686M830 668V686M831 669V685M832 670V686M833 666V686M834 670V686M835 669V689M836 667V685M837 669V686M838 670V686M839 670V685M840 669V685M841 670V686M842 669V686M843 671V684M844 670V686M845 671V685M846 669V685M847 670V686M848 668V686M849 670V686M850 669V684M851 669V685M852 669V686M853 668V685M854 670V687M855 669V687M856 669V685M857 669V685M858 670V686M859 668V685M860 670V686M861 669V686M862 669V687M863 668V685M864 667V685M865 670V685M866 669V686M867 669V685M868 669V685M869 668V689M870 670V685M871 670V686M872 670V686M873 670V685M874 670V685M875 671V686M876 670V686M877 670V685M878 670V688M879 669V685M880 669V684M881 670V686M882 668V684M883 670V685M884 669V685M885 671V686M886 670V686M887 670V693M888 670V685M889 669V685M890 670V685M891 670V685M892 670V685M893 670V689M894 670V690M895 671V684M896 670V686M897 670V685M898 671V685M899 670V684M900 669V685M901 670V686M902 670V685M903 668V685M904 670V685M905 670V684M906 670V685M907 670V685M908 670V685M909 670V685M910 670V687M911 671V685M912 671V685M913 667V685M914 668V686M915 670V686M916 670V685M917 670V685M918 669V694M919 669V685M920 669V685M921 669V685M922 669V685M923 668V684M924 670V685M925 670V685M926 669V684M927 668V687M928 670V685M929 669V686M930 670V686M931 670V687M932 669V685M1102 658V694M1103 651V699M1104 650V700M1105 659V695M1106 656V697M1107 656V694M1108 657V695M1109 631V724M1110 653V700M1111 646V703M1112 645V707M1113 655V708M1114 653V703M1115 650V703M1116 659V694M1117 645V694M1118 654V698M1119 660V699M1120 658V696M1121 657V697M1122 656V698M1123 648V698M1124 658V699M1125 660V708M1126 647V695M1127 647V692M1128 655V699M1129 648V699M1130 652V693M1131 651V702M1132 658V694M1133 658V695M1134 659V693M1135 647V700M1136 634V722M1137 659V703M1138 652V694M1139 655V710M1140 661V706M1141 646V697M1142 656V701M1143 662V695M1144 661V699M1145 650V696M1146 655V693M1147 655V701M1148 659V701M1149 663V699M1150 657V703M1151 659V696M1152 657V707M1153 661V694M1154 659V695M1155 651V702M1156 658V694M1157 658V698M1158 655V703M1159 657V694M1160 653V696M1161 640V700M1162 643V701M1163 654V706M1164 657V710M1165 660V700M1166 656V700M1167 658V698M1168 657V695M1169 661V703M1170 657V694M1171 656V702M1172 659V706M1173 662V697M1174 655V696M1175 666V697M1176 661V697M1177 661V696M1178 657V696M1179 661V706M1180 661V704M1181 648V729M1182 653V706M1183 659V707M1184 660V696M1185 657V713M1186 659V712M1187 643V697M1188 656V697M1189 662V698M1190 654V695M1191 658V700M1192 654V715M1193 651V707M1194 649V703M1195 642V694M1196 652V693M1197 657V696M1198 653V696M1199 651V695M1200 661V698M1201 632V693M1202 651V698M1203 661V696M1204 653V698M1205 660V708M1206 656V700M1207 659V706M1208 661V703M1209 659V698M1210 654V698M1211 659V700M1212 649V697M1213 660V696M1214 658V695M1215 652V701M1216 656V713M1217 654V696M1218 659V703M1219 652V700M1220 657V697M1221 660V695M1222 648V699M1223 651V698M1224 631V703M1225 661V710M1226 662V718M1227 652V700M1228 660V701M1229 663V703M1230 659V696M1231 656V701M1232 655V704M1233 655V707M1234 659V700M1235 656V701M1236 656V703M1237 659V695M1238 638V698M1239 657V700M1240 657V693M1241 650V696M1242 658V699M1243 645V697M1244 661V696M1245 663V703M1246 636V714M1247 652V704M1248 660V704M1249 655V693M1250 660V697M1251 652V705M1252 658V700M1253 650V702M1254 659V696M1255 660V694M1256 659V697M1257 658V695M1258 663V701M1259 661V715M1260 654V696M1261 657V724M1262 659V694M1263 662V704M1264 659V704M1265 659V697M1266 657V699M1267 663V694M1268 661V693M1269 660V718M1270 661V698M1271 659V691M1272 661V694M1273 651V697M1274 635V690M1275 653V696M1276 658V697M1277 658V698M1278 658V700M1279 656V697M1280 650V708M1281 658V696M1282 660V693M1283 653V700M1284 657V695M1285 655V698M1286 660V694M1287 658V693M1288 656V693M1289 656V699M1290 658V701M1291 647V694M1292 654V697M1293 659V697M1294 661V695M1295 659V696M1296 660V700M1297 659V698M1298 640V695M1299 657V696M1300 660V694M1301 661V696M1302 652V698M1303 662V693M1304 659V694M1305 656V702M1306 662V696M1307 661V696M1308 664V694M1309 664V692M1310 658V698M1311 660V695M1312 662V696M1313 659V700M1314 647V692M1315 659V695M1316 661V694M1317 659V698M1318 659V700M1319 659V695M1320 653V700M1321 659V695M1322 662V697M1323 665V692M1324 661V700M1325 656V698M1326 661V692M1327 661V694M1328 659V705M1329 656V700M1330 653V697M1331 649V696M1332 661V708M1333 654V693M1334 664V695M1335 659V700M1336 664V699M1337 661V697M1338 657V696M1339 646V703M1340 650V707M1341 661V695M1342 655V697M1343 653V695M1344 660V695M1345 661V698M1346 659V695M1347 659V701M1348 658V699M1349 655V698M1350 660V698M1351 660V696M1352 662V696M1353 652V697M1354 658V695M1355 657V709M1356 656V698M1357 658V702M1358 661V690M1359 651V702M1360 658V695M1361 657V699M1362 654V702M1363 646V719M1364 656V694M1365 654V699M1366 659V697M1367 652V705M1368 653V703M1369 657V694M1370 657V698M1371 659V695M1372 641V697M1373 660V703M1374 652V699M1375 661V705M1376 660V704M1377 661V697M1378 661V698M1379 652V699M1380 658V696M1381 658V703M1382 657V697M1383 658V698M1384 657V696M1385 650V701M1386 656V707M1387 652V703M1388 658V703M1389 657V705M1390 655V715M1391 659V701M1392 658V716M1393 648V702M1394 655V703M1395 653V704M1396 656V708M1397 648V704M1398 651V699M1399 637V713M1400 656V702M1401 658V702M1402 647V715M1403 649V708M1404 649V706M1405 659V715M1406 653V713M1407 658V711M1408 647V707M1409 652V717M1410 654V704M1411 653V701M1412 646V712M1413 644V712M1414 651V715M1415 650V707M1416 634V722M1417 652V708M1418 649V710M1419 641V721M1420 639V710M1421 647V709M1422 652V710M1423 648V713M1424 642V709M1425 649V708M1426 645V724M1427 641V704M1428 642V718M1429 642V713M1430 647V712M1431 648V724M1432 648V716M1433 648V726M1434 650V715M1435 647V714M1436 642V718M1437 627V713M1438 648V719M1439 632V715M1440 645V717M1441 650V720M1442 651V720M1443 651V724M1444 649V722M1445 647V724M1446 646V706M1447 641V713M1448 638V715M1449 640V720M1450 639V717M1451 643V718M1452 629V727M1453 642V723M1454 643V717M1455 630V710M1456 640V714M1457 635V725M1458 638V721M1459 632V744M1460 640V714M1461 646V718M1462 644V725M1463 650V713M1464 641V706M1465 637V708M1466 644V713M1467 635V724M1468 637V722M1469 633V718M1470 644V721M1471 631V712M1472 635V717M1473 646V724M1474 646V714M1475 630V711M1476 638V715M1477 638V718M1478 643V724M1479 641V722M1480 639V724M1481 643V714M1482 642V720M1483 642V731M1484 632V714M1485 636V719M1486 632V713M1487 643V735M1488 635V727M1489 631V722M1490 640V723M1491 648V720M1492 637V720M1493 633V727M1494 635V730M1495 644V720M1496 625V721M1497 639V724M1498 643V725M1499 639V727M1500 639V716M1501 629V718M1502 632V726M1503 637V725M1504 640V716M1505 637V728M1506 638V724M1507 635V725M1508 636V724M1509 639V719M1510 643V724M1511 637V728M1512 636V719M1513 626V715M1514 631V729M1515 626V716M1516 630V720M1517 638V729M1518 638V721M1519 641V720M1520 643V723M1521 630V726M1522 628V721M1523 633V718M1524 637V728M1525 633V736M1526 630V711M1527 630V723M1528 637V729M1529 624V722M1530 629V724M1531 631V726M1532 631V729M1533 638V723M1534 637V732M1535 641V722M1536 639V729M1537 642V723M1538 633V725M1539 632V717M1540 632V720M1541 634V727M1542 631V723M1543 635V719M1544 626V729M1545 631V734M1546 627V722M1547 638V718M1548 625V721M1549 623V723M1550 632V728M1551 621V734M1552 627V729M1553 628V724M1554 628V721M1555 629V719M1556 619V725M1557 629V726M1558 619V726M1559 626V735M1560 621V727M1561 632V728M1562 613V724M1563 620V714M1564 636V724M1565 619V718M1566 623V715M1567 637V718M1568 637V718M1569 632V719M1570 635V714M1571 632V730M1572 609V735M1573 617V725M1574 641V725M1575 626V725M1576 641V719M1577 622V734M1578 630V728M1579 630V731M1580 621V725M1581 634V724M1582 618V728M1583 619V719M1584 628V726M1585 619V722M1586 620V734M1587 629V736M1588 613V728M1589 632V722M1590 630V726M1591 625V723M1592 625V722M1593 625V723M1594 634V732M1595 632V743M1596 614V723M1597 629V744M1598 599V733M1599 615V738M1600 614V730M1601 615V727M1602 628V730M1603 618V727M1604 636V724M1605 624V723M1606 622V729M1607 622V728M1608 633V737M1609 629V726M1610 624V739M1611 627V731M1612 639V728M1613 624V737M1614 628V733M1615 621V733M1616 635V722M1617 619V727M1618 629V740M1619 637V729M1620 634V741M1621 629V732M1622 629V732M1623 629V753M1624 639V741M1625 640V740M1626 629V730M1627 616V721M1628 626V724M1629 636V740M1630 634V736M1631 631V733M1632 631V742M1633 638V734M1634 631V734M1635 622V731M1636 625V738M1637 625V740M1638 602V739M1639 626V745M1640 635V742M1641 633V738M1642 621V740M1643 604V747M1644 616V739M1645 619V731M1646 633V735M1647 610V726M1648 615V736M1649 621V732M1650 632V738M1651 626V737M1652 623V756M1653 623V726M1654 626V733M1655 621V736M1656 636V737M1657 623V727M1658 628V743M1659 599V731M1660 617V736M1661 629V727M1662 629V737M1663 623V725M1664 619V745M1665 626V732M1666 619V731M1667 637V756M1668 634V718M1669 629V743M1670 628V734M1671 625V727M1672 623V727M1673 622V741M1674 626V721M1675 618V736M1676 600V734M1677 623V738M1678 632V731M1679 621V731M1680 630V728M1681 611V731M1682 617V736M1683 629V727M1684 624V727M1685 627V739M1686 629V743M1687 629V733M1688 622V718M1689 632V735M1690 630V739M1691 634V728M1692 620V732M1693 620V739M1694 626V719M1695 626V733M1696 628V727M1697 623V731M1698 634V735M1699 626V742M1700 631V738M1701 627V735M1702 626V763M1703 617V737M1704 634V734M1705 630V734M1706 624V740M1707 630V724M1708 631V724M1709 641V736M1710 621V746M1711 622V732M1712 630V737M1713 628V730M1714 630V734M1715 622V740M1716 622V737M1717 627V741M1718 616V729M1719 634V733M1720 623V743M1721 633V731M1722 611V735M1723 633V728M1724 623V729M1725 627V724M1726 636V732M1727 623V727M1728 624V729M1729 623V736M1730 630V732M1731 633V745M1732 632V736M1733 625V736M1734 622V720M1735 629V734M1736 623V729M1737 638V741M1738 628V729M1739 619V733M1740 620V749M1741 638V739M1742 634V741M1743 623V736M1744 628V739M1745 644V746M1746 634V726M1747 623V735M1748 633V735M1749 630V733M1750 631V725M1751 628V727M1752 623V730M1753 626V729M1754 625V732M1755 633V745M1756 625V738M1757 622V726M1758 633V727M1759 631V728M1760 624V718M1761 604V731M1762 626V728M1763 629V738M1764 627V726M1765 638V735M1766 629V725M1767 630V718M1768 642V732M1769 631V725M1770 638V726M1771 623V731M1772 622V731M1773 625V729M1774 628V719M1775 609V740M1776 618V729M1777 623V729M1778 625V729M1779 618V738M1780 635V723M1781 634V736M1782 622V727M1783 626V730M1784 626V735M1785 634V736M1786 626V746M1787 626V732M1788 634V731M1789 632V735M1790 628V733M1791 635V725M1792 639V737M1793 632V727M1794 620V731M1795 640V742M1796 642V736M1797 627V730M1798 624V729" stroke="#4cf0a8" stroke-width="1" transform="translate(0.5,0)"/><rect x="219" y="677" width="1580" height="1" fill="#37b07a"/><rect x="170" y="677" width="49" height="1" fill="#163c2a"/></svg>
<div class="a" style="left:170px;top:872px;width:1629px;height:18px;background:#4a505e;"></div><div class="a" style="left:170px;top:890px;width:1629px;height:1px;background:#8c96a6;"></div><div class="a" style="left:170px;top:872px;width:1629px;height:1px;background:#9aa2b0;"></div><div class="a" style="left:163px;top:891px;width:1636px;height:8px;background:#687282;"></div><svg class="a" style="left:0;top:872px" width="1799" height="27" viewBox="0 872 1799 27"><path d="M170.5 872V877M183.5 872V875M196.5 872V875M209.5 872V875M223.5 872V875M236.5 872V877M249.5 872V875M263.5 872V875M276.5 872V875M289.5 872V875M303.5 872V877M316.5 872V875M329.5 872V875M343.5 872V875M356.5 872V875M369.5 872V877M383.5 872V875M396.5 872V875M409.5 872V875M422.5 872V875M436.5 872V877M449.5 872V875M462.5 872V875M476.5 872V875M489.5 872V875M502.5 872V877M516.5 872V875M529.5 872V875M542.5 872V875M556.5 872V875M569.5 872V877M582.5 872V875M596.5 872V875M609.5 872V875M622.5 872V875M635.5 872V877M649.5 872V875M662.5 872V875M675.5 872V875M689.5 872V875M702.5 872V877M715.5 872V875M729.5 872V875M742.5 872V875M755.5 872V875M769.5 872V877M782.5 872V875M795.5 872V875M809.5 872V875M822.5 872V875M835.5 872V877M848.5 872V875M862.5 872V875M875.5 872V875M888.5 872V875M902.5 872V877M915.5 872V875M928.5 872V875M942.5 872V875M955.5 872V875M968.5 872V877M982.5 872V875M995.5 872V875M1008.5 872V875M1022.5 872V875M1035.5 872V877M1048.5 872V875M1061.5 872V875M1075.5 872V875M1088.5 872V875M1101.5 872V877M1115.5 872V875M1128.5 872V875M1141.5 872V875M1155.5 872V875M1168.5 872V877M1181.5 872V875M1195.5 872V875M1208.5 872V875M1221.5 872V875M1235.5 872V877M1248.5 872V875M1261.5 872V875M1274.5 872V875M1288.5 872V875M1301.5 872V877M1314.5 872V875M1328.5 872V875M1341.5 872V875M1354.5 872V875M1368.5 872V877M1381.5 872V875M1394.5 872V875M1408.5 872V875M1421.5 872V875M1434.5 872V877M1447.5 872V875M1461.5 872V875M1474.5 872V875M1487.5 872V875M1501.5 872V877M1514.5 872V875M1527.5 872V875M1541.5 872V875M1554.5 872V875M1567.5 872V877M1581.5 872V875M1594.5 872V875M1607.5 872V875M1621.5 872V875M1634.5 872V877M1647.5 872V875M1660.5 872V875M1674.5 872V875M1687.5 872V875M1700.5 872V877M1714.5 872V875M1727.5 872V875M1740.5 872V875M1754.5 872V875M1767.5 872V877M1780.5 872V875M1794.5 872V875" stroke="#d8dce4" stroke-width="1" shape-rendering="crispEdges"/><g font-family="Liberation Sans,sans-serif" font-size="9.3" fill="#e6e6e6" style="paint-order:stroke;text-shadow:1px 1px 0 #16181e"><text x="172" y="884.5">hms</text><text x="236" y="884.5" text-anchor="middle">0:05.0</text><text x="302" y="884.5" text-anchor="middle">0:10.0</text><text x="369" y="884.5" text-anchor="middle">0:15.0</text><text x="436" y="884.5" text-anchor="middle">0:20.0</text><text x="502" y="884.5" text-anchor="middle">0:25.0</text><text x="569" y="884.5" text-anchor="middle">0:30.0</text><text x="635" y="884.5" text-anchor="middle">0:35.0</text><text x="702" y="884.5" text-anchor="middle">0:40.0</text><text x="768" y="884.5" text-anchor="middle">0:45.0</text><text x="835" y="884.5" text-anchor="middle">0:50.0</text><text x="902" y="884.5" text-anchor="middle">0:55.0</text><text x="968" y="884.5" text-anchor="middle">1:00.0</text><text x="1035" y="884.5" text-anchor="middle">1:05.0</text><text x="1101" y="884.5" text-anchor="middle">1:10.0</text><text x="1168" y="884.5" text-anchor="middle">1:15.0</text><text x="1234" y="884.5" text-anchor="middle">1:20.0</text><text x="1301" y="884.5" text-anchor="middle">1:25.0</text><text x="1367" y="884.5" text-anchor="middle">1:30.0</text><text x="1434" y="884.5" text-anchor="middle">1:35.0</text><text x="1501" y="884.5" text-anchor="middle">1:40.0</text><text x="1567" y="884.5" text-anchor="middle">1:45.0</text><text x="1634" y="884.5" text-anchor="middle">1:50.0</text><text x="1700" y="884.5" text-anchor="middle">1:55.0</text><text x="1767" y="884.5" text-anchor="middle">2:00.0</text></g><path d="M170 891V897H176Z M219 891V897H213Z" fill="#f4f428"/></svg>
<div class="a" style="left:0px;top:61px;width:157px;height:838px;background:#4f5664;"></div><div class="a" style="left:0px;top:61px;width:154px;height:1px;background:#8a93a2;"></div><div class="a" style="left:0px;top:62px;width:154px;height:1px;background:#3a404c;"></div><div class="a" style="left:0px;top:64px;width:154px;height:1px;background:#8a93a2;"></div><div class="a" style="left:0px;top:65px;width:154px;height:1px;background:#3a404c;"></div><div class="a" style="left:0px;top:67px;width:154px;height:1px;background:#8a93a2;"></div><div class="a" style="left:0px;top:68px;width:154px;height:1px;background:#3a404c;"></div><div class="a" style="left:-20px;top:76px;width:28px;height:19px;background:#5b6372;border:1px solid;border-color:#aab2c0 #2e333d #5b6372 #aab2c0"></div><div class="a" style="left:9px;top:78px;width:45px;height:16px;background:linear-gradient(180deg,#8490a4 0%,#66718a 45%,#4c5568 100%);border:1px solid;border-color:#b4bccb #394050 #394050 #b4bccb;border-bottom:none"><span class="a" style="left:4px;top:1px;font-size:12px;line-height:14px;color:#c4cad6;letter-spacing:0px">效果</span></div><div class="a" style="left:56px;top:78px;width:51px;height:16px;background:linear-gradient(180deg,#8490a4 0%,#66718a 45%,#4c5568 100%);border:1px solid;border-color:#b4bccb #394050 #394050 #b4bccb;border-bottom:none"><span class="a" style="left:4px;top:1px;font-size:12px;line-height:14px;color:#c4cad6;letter-spacing:0px">偏好</span></div><div class="a" style="left:0px;top:94px;width:153px;height:800px;background:#5b6372;border:1px solid;border-color:#a0a9b8 #2e333d #2e333d #a0a9b8;border-left:none"></div><div class="tb" style="left:5px;top:102px"><svg viewBox="0 0 21 21"><path d="M3.500 7.500L5 5.500H9L10 7.500H16.500V15.500H3.500Z" fill="#dcdcdc" stroke="#9a9a9a"/><path d="M7.500 9.500L12.500 13.500M12.500 9.500L7.500 13.500" stroke="#9a9a9a" stroke-width="1"/></svg></div><div class="tb" style="left:28px;top:102px"><svg viewBox="0 0 21 21"><path d="M7.500 3.500H12.500M10 1.500V5.500" stroke="#8a8a8a" stroke-width="1.600"/><rect x="3.500" y="7.500" width="13" height="4" fill="#dcdcdc" stroke="#8a8a8a"/><rect x="3.500" y="13.500" width="13" height="4" fill="#dcdcdc" stroke="#8a8a8a"/><path d="M8 9.500H15M5 15.500H11" stroke="#8a8a8a" stroke-width="1.400"/></svg></div><div class="tb" style="left:51px;top:102px"><svg viewBox="0 0 21 21"><path d="M7.500 3.500H12.500M10 1.500V5.500" stroke="#8a8a8a" stroke-width="1.600"/><rect x="3.500" y="8.500" width="13" height="9" fill="#dcdcdc" stroke="#8a8a8a"/><path d="M4 13H16M7 10.500V15.500M10 11V15M13 10.500V15.500M15 12V14" stroke="#8a8a8a" stroke-width="1.300"/></svg></div><div class="tb p" style="left:81px;top:102px;background:linear-gradient(180deg,#dedee2,#bcbcc0)"><svg viewBox="0 0 21 21"><g transform="translate(0,1)"><path d="M2.500 3.500H5M2.500 3.500V6M2.500 3.500L6 7M2.500 11.500H5M2.500 11.500V14M2.500 11.500L6 15" stroke="#222" stroke-width="1" fill="none"/><g transform="translate(13,9.5)"><path d="M-1 -5H1L1.500 -3.500L3 -4.200L4.200 -3L3.500 -1.500L5 -1V1L3.500 1.500L4.200 3L3 4.200L1.500 3.500L1 5H-1L-1.500 3.500L-3 4.200L-4.200 3L-3.500 1.500L-5 1V-1L-3.500 -1.500L-4.200 -3L-3 -4.200L-1.500 -3.500Z" fill="#e4e428" stroke="#3a3a08" stroke-width=".9"/><circle r="1.500" fill="#d8d8d8" stroke="#3a3a08" stroke-width=".8"/></g></g></svg></div><div class="tb" style="left:111px;top:102px"><svg viewBox="0 0 21 21"><text x="10.5" y="16" font-size="15" font-weight="bold" font-family="Liberation Sans,sans-serif" text-anchor="middle" fill="#ecec3c" stroke="#1e1e06" stroke-width="1.800" stroke-linejoin="round" paint-order="stroke">?</text></svg></div><div class="a" style="left:0px;top:132px;width:145px;height:670px;background:#424855;border:1px solid;border-color:#2a2e38 #8e97a6 #8e97a6 #2a2e38;border-left:none"></div><div class="a" style="left:0px;top:135px;width:140px;height:16px;background:#f2f2f2;"></div><span class="a" style="left:1px;top:137px;font-family:'Liberation Mono',monospace;font-size:9px;line-height:12px;color:#111;letter-spacing:0.4px;font-weight:bold">.wav</span><span class="a lt" style="left:-3px;top:809px;font-size:12px;line-height:14px">文件类型:</span><span class="a lt" style="left:64px;top:809px;font-size:12px;line-height:14px">种类:</span><div class="a" style="left:0px;top:825px;width:57px;height:63px;background:#4b515f;border:1px solid;border-color:#2a2e38 #8e97a6 #8e97a6 #2a2e38;border-left:none"></div><svg class="a" style="left:0;top:828px" width="10" height="46" viewBox="0 0 10 46"><rect x="-1" y="1" width="9" height="11" fill="#0a1a14" stroke="#222" stroke-width="1"/><path d="M0 6.5H8M3 4V9M5 3V10" stroke="#3fe09a" stroke-width="1"/><rect x="-1" y="17" width="9" height="11" fill="#0a1a3a" stroke="#222" stroke-width="1"/><path d="M2 19V25M2 19H6V24" stroke="#3a7ae0" stroke-width="1.4" fill="none"/><rect x="-1" y="33" width="9" height="11" fill="#9a9a9a" stroke="#222" stroke-width="1"/><path d="M6.5 34V43" stroke="#333" stroke-width="1" stroke-dasharray="1 1"/></svg><span class="a lt" style="left:12px;top:829px;font-size:12px;line-height:14px">波形</span><span class="a lt" style="left:11px;top:846px;font-family:'Liberation Mono',monospace;font-size:10px;line-height:12px;font-weight:bold;letter-spacing:0px">MIDI</span><span class="a lt" style="left:12px;top:861px;font-size:12px;line-height:14px">视频</span><div class="a" style="left:63px;top:825px;width:80px;height:20px;background:#3f4553;border:2px solid;border-color:#2c313b #d4d9e2 #d4d9e2 #2c313b"></div><span class="a" style="left:66px;top:829px;width:58px;overflow:hidden;font-size:12px;line-height:14px;color:#f4f4f4;white-space:nowrap">最近的数据</span><div class="a" style="left:124px;top:828px;width:16px;height:14px;background:#e8e8e8;border:1px solid;border-color:#fff #555 #555 #fff"></div><svg class="a" style="left:127px;top:832px" width="10" height="6"><path d="M1 0H9L5 5Z" fill="#000"/></svg><div class="a" style="left:63px;top:849px;width:80px;height:16px;background:linear-gradient(180deg,#7d8799 0%,#5e687a 50%,#4a5262 100%);border:1px solid;border-color:#b8c0ce #2c313b #2c313b #b8c0ce;text-align:center;font-size:9.5px;line-height:13px;color:#e4e6ea;text-shadow:1px 1px 0 #2a2e38;letter-spacing:1px;white-space:nowrap;overflow:hidden;will-change:transform">自动播放</div><div class="a" style="left:63px;top:869px;width:80px;height:16px;background:linear-gradient(180deg,#7d8799 0%,#5e687a 50%,#4a5262 100%);border:1px solid;border-color:#b8c0ce #2c313b #2c313b #b8c0ce;text-align:center;font-size:9.5px;line-height:13px;color:#e4e6ea;text-shadow:1px 1px 0 #2a2e38;letter-spacing:1px;white-space:nowrap;overflow:hidden;will-change:transform">完整路径</div><div class="a" style="left:0px;top:899px;width:1799px;height:1px;background:#9aa4b2;"></div><div class="a" style="left:0px;top:900px;width:1799px;height:2px;background:#5a6272;"></div><div class="a" style="left:0px;top:902px;width:1799px;height:3px;background:#464c5a;"></div><div class="a" style="left:0px;top:904px;width:1799px;height:55px;background:#667080;"></div><div class="bb" style="left:-25px;top:909px"></div><div class="bb" style="left:-25px;top:932px"></div><div class="bb" style="left:4px;top:909px"><svg viewBox="0 0 26 20"><path d="M8 4L15.500 10L8 16Z" fill="#1a806a"/></svg></div><div class="bb" style="left:33px;top:909px"><svg viewBox="0 0 26 20"><rect x="7.300" y="4.800" width="4" height="10.500" fill="#8c8c8c"/><rect x="13.300" y="4.800" width="4" height="10.500" fill="#8c8c8c"/></svg></div><div class="bb" style="left:62px;top:909px"><svg viewBox="0 0 26 20"><circle cx="13" cy="10" r="6.500" fill="none" stroke="#1a806a" stroke-width="1.800"/><path d="M11 6L16 10L11 14Z" fill="#1a806a"/></svg></div><div class="bb" style="left:91px;top:909px"><svg viewBox="0 0 26 20"><path transform="translate(-0.5,-0.8)" d="M13 10C11 6.500 5.500 6.500 5.500 10C5.500 13.500 11 13.500 13 10C15 6.500 20.500 6.500 20.500 10C20.500 13.500 15 13.500 13 10Z" fill="none" stroke="#1a806a" stroke-width="2.400"/></svg></div><div class="bb" style="left:4px;top:932px"><svg viewBox="0 0 26 20"><path d="M12 4V16L5 10ZM20 4V16L13 10Z" fill="#1a806a"/></svg></div><div class="bb" style="left:33px;top:932px"><svg viewBox="0 0 26 20"><path d="M6 4V16L13 10ZM14 4V16L21 10Z" fill="#1a806a"/></svg></div><div class="bb" style="left:62px;top:932px"><svg viewBox="0 0 26 20"><path d="M8 4V16L15 10Z" fill="#1a806a"/><rect x="16" y="4" width="2.400" height="12" fill="#1a806a"/></svg></div><div class="bb" style="left:91px;top:932px"><svg viewBox="0 0 26 20"><circle cx="13.500" cy="9.500" r="4.600" fill="#b81018"/><circle cx="12" cy="8" r="1.200" fill="#e05058"/></svg></div><div class="a" style="left:125px;top:905px;width:3px;height:54px;background:#7a8494;border-left:1px solid #a8b0bc;border-right:1px solid #3a404c"></div><div class="a" style="left:131px;top:907px;width:1px;height:52px;background:#a8b0bc;"></div><div class="a" style="left:132px;top:907px;width:1px;height:52px;background:#3a404c;"></div><div class="a" style="left:134px;top:907px;width:1px;height:52px;background:#a8b0bc;"></div><div class="a" style="left:135px;top:907px;width:1px;height:52px;background:#3a404c;"></div><div class="bb" style="left:143px;top:909px"><svg viewBox="0 0 26 20"><circle cx="11.5" cy="8.5" r="4.5" fill="none" stroke="#222" stroke-width="1.200"/><path d="M14.875 11.875L18.875 15.875" stroke="#2a9a80" stroke-width="2"/><path d="M9 8.5H14" stroke="#222" stroke-width="1"/><path d="M11.5 6V11" stroke="#222" stroke-width="1"/></svg></div><div class="bb" style="left:172px;top:909px"><svg viewBox="0 0 26 20"><circle cx="11.5" cy="8.5" r="4.5" fill="none" stroke="#a8a8a8" stroke-width="1.200"/><path d="M14.875 11.875L18.875 15.875" stroke="#b8b8b8" stroke-width="2"/><path d="M9 8.5H14" stroke="#a8a8a8" stroke-width="1"/></svg></div><div class="bb" style="left:201px;top:909px"><svg viewBox="0 0 26 20"><path d="M12.500 3.500H17L20.500 7V16.500H12.500Z" fill="#e8e8e8" stroke="#a0a0a0"/><circle cx="10" cy="9" r="4.5" fill="none" stroke="#a8a8a8" stroke-width="1.200"/><path d="M13.375 12.375L17.375 16.375" stroke="#b8b8b8" stroke-width="2"/></svg></div><div class="bb" style="left:237px;top:909px"><svg viewBox="0 0 26 20"><path d="M6.500 3V17M4.500 5.500L6.500 3L8.500 5.500M4.500 14.500L6.500 17L8.500 14.500" fill="none" stroke="#222" stroke-width="1.200"/><circle cx="15.5" cy="8.5" r="4.5" fill="none" stroke="#222" stroke-width="1.200"/><path d="M18.875 11.875L22.875 15.875" stroke="#2a9a80" stroke-width="2"/><path d="M13 8.5H18" stroke="#222" stroke-width="1"/><path d="M15.5 6V11" stroke="#222" stroke-width="1"/></svg></div><div class="bb" style="left:143px;top:932px"><svg viewBox="0 0 26 20"><rect x="5" y="3" width="15" height="14" fill="#f0f080"/><circle cx="11" cy="8" r="4.5" fill="#f4f4b0" stroke="#222" stroke-width="1.200"/><path d="M14.375 11.375L18.375 15.375" stroke="#2a9a80" stroke-width="2"/></svg></div><div class="bb" style="left:172px;top:932px"><svg viewBox="0 0 26 20"><rect x="13" y="3" width="6" height="14" fill="#f0f080"/><circle cx="11" cy="8" r="4.5" fill="none" stroke="#222" stroke-width="1.200"/><path d="M14.375 11.375L18.375 15.375" stroke="#2a9a80" stroke-width="2"/></svg></div><div class="bb" style="left:201px;top:932px"><svg viewBox="0 0 26 20"><rect x="6" y="3" width="6" height="14" fill="#f0f080"/><circle cx="14" cy="8" r="4.5" fill="none" stroke="#222" stroke-width="1.200"/><path d="M17.375 11.375L21.375 15.375" stroke="#2a9a80" stroke-width="2"/></svg></div><div class="bb" style="left:237px;top:932px"><svg viewBox="0 0 26 20"><path d="M6.500 3V17M4.500 5.500L6.500 3L8.500 5.500M4.500 14.500L6.500 17L8.500 14.500" fill="none" stroke="#222" stroke-width="1.200"/><circle cx="15.5" cy="8.5" r="4.5" fill="none" stroke="#222" stroke-width="1.200"/><path d="M18.875 11.875L22.875 15.875" stroke="#2a9a80" stroke-width="2"/><path d="M13 8.5H18" stroke="#222" stroke-width="1"/></svg></div><div class="a" style="left:270px;top:905px;width:3px;height:54px;background:#7a8494;border-left:1px solid #a8b0bc;border-right:1px solid #3a404c"></div><div class="a" style="left:277px;top:907px;width:1px;height:52px;background:#a8b0bc;"></div><div class="a" style="left:278px;top:907px;width:1px;height:52px;background:#3a404c;"></div><div class="a" style="left:280px;top:907px;width:1px;height:52px;background:#a8b0bc;"></div><div class="a" style="left:281px;top:907px;width:1px;height:52px;background:#3a404c;"></div><div class="a" style="left:867px;top:906px;font-size:46px;line-height:52px;color:#eef0f4;white-space:nowrap;letter-spacing:0.3px;will-change:transform">0:00.000</div><div class="a" style="left:1605px;top:905px;width:3px;height:54px;background:#7a8494;border-left:1px solid #a8b0bc;border-right:1px solid #3a404c"></div><div class="a" style="left:1612px;top:907px;width:1px;height:52px;background:#a8b0bc;"></div><div class="a" style="left:1613px;top:907px;width:1px;height:52px;background:#3a404c;"></div><div class="a" style="left:1615px;top:907px;width:1px;height:52px;background:#a8b0bc;"></div><div class="a" style="left:1616px;top:907px;width:1px;height:52px;background:#3a404c;"></div><span class="a lt" style="left:1654px;top:906px;font-size:12px;line-height:14px">始</span><span class="a lt" style="left:1729px;top:906px;font-size:12px;line-height:14px">尾</span><span class="a lt" style="left:1633px;top:924px;font-size:12px;line-height:14px">选</span><span class="a lt" style="left:1624px;top:944px;font-size:12px;line-height:14px">查看</span><div class="tbox" style="left:1653px;top:921px;width:72px">0:00.000</div><div class="tbox" style="left:1728px;top:921px;width:72px">0:03.680</div><div class="tbox" style="left:1653px;top:941px;width:72px">0:00.000</div><div class="tbox" style="left:1728px;top:941px;width:72px">2:04.899</div><div class="a" id="dlg"><div class="a" style="left:0px;top:0px;width:527px;height:25px;background:#fff;"></div><span class="t" style="left:4px;top:6px;">降噪器</span><svg class="a" style="left:506px;top:6px" width="12" height="12"><path d="M1 1L11 11M11 1L1 11" stroke="#000" stroke-width="1.1"/></svg><span class="t" style="left:6px;top:31px;">噪音采样:当前采样</span><div class="rad on" style="left:238px;top:32px"></div><span class="t" style="left:254px;top:32px;">左声道</span><div class="rad" style="left:297px;top:32px"></div><span class="t" style="left:314px;top:32px;">右声道</span><div class="a" style="left:6px;top:48px;width:349px;height:103px;background:#000;border:1px solid;border-color:#7a7a7a #d8d8d8 #d8d8d8 #7a7a7a"></div><svg class="a" style="left:7px;top:49px" width="347" height="101" viewBox="499 338 347 101" shape-rendering="crispEdges"><path d="M500 398v1M500 400v1M500 401v1M500 404v1M500 406v1M500 408v1M500 412v1M501 400v1M501 401v1M501 402v1M501 403v1M501 405v1M501 406v1M502 403v1M502 404v1M502 405v1M502 407v1M502 409v1M503 402v1M503 404v1M503 406v1M503 408v1M503 409v1M503 412v1M503 414v1M503 415v1M504 403v1M504 404v1M504 405v1M504 406v1M504 407v1M504 408v1M504 409v1M504 410v1M505 404v1M505 405v1M505 408v1M505 410v1M505 411v1M505 414v1M506 400v1M506 405v1M506 408v1M506 411v1M506 416v1M507 406v1M507 412v1M507 413v1M507 419v1M508 410v1M508 411v1M508 412v1M508 413v1M508 414v1M508 415v1M508 416v1M509 398v1M509 404v1M509 409v1M509 412v1M509 413v1M509 414v1M509 417v1M510 405v1M510 406v1M510 409v1M510 411v1M510 415v1M510 416v1M510 419v1M510 421v1M511 405v1M511 408v1M511 409v1M511 411v1M511 412v1M511 413v1M511 418v1M511 420v1M512 412v1M512 414v1M512 424v1M513 409v1M513 410v1M513 411v1M513 414v1M513 417v1M513 418v1M513 419v1M514 407v1M514 409v1M514 412v1M514 413v1M514 418v1M515 407v1M515 411v1M515 415v1M515 421v1M515 423v1M516 408v1M516 409v1M516 411v1M516 413v1M516 416v1M516 428v1M517 410v1M517 412v1M517 413v1M517 415v1M517 417v1M517 419v1M517 421v1M518 414v1M518 416v1M518 420v1M518 425v1M519 405v1M519 406v1M519 410v1M519 411v1M519 412v1M519 413v1M519 414v1M519 416v1M519 417v1M519 419v1M520 408v1M520 413v1M520 416v1M520 419v1M521 413v1M521 415v1M521 420v1M522 414v1M522 415v1M522 418v1M523 414v1M523 416v1M523 418v1M523 419v1M523 421v1M524 413v1M524 414v1M524 415v1M524 416v1M524 418v1M524 419v1M524 420v1M525 412v1M525 413v1M525 414v1M525 415v1M525 422v1M526 412v1M526 414v1M526 417v1M526 418v1M526 419v1M527 413v1M527 417v1M527 419v1M528 414v1M528 416v1M528 417v1M529 408v1M529 416v1M529 417v1M529 418v1M529 420v1M529 422v1M530 412v1M530 417v1M530 420v1M530 423v1M530 424v1M531 413v1M531 418v1M531 420v1M532 415v1M532 416v1M532 418v1M532 419v1M532 420v1M533 413v1M533 414v1M533 417v1M533 418v1M533 419v1M534 414v1M534 420v1M534 422v1M535 416v1M535 417v1M535 419v1M535 422v1M536 410v1M536 412v1M536 413v1M536 415v1M536 417v1M536 418v1M536 419v1M536 420v1M536 424v1M537 412v1M537 416v1M537 419v1M537 420v1M537 421v1M537 424v1M538 416v1M538 418v1M538 419v1M539 415v1M539 416v1M539 418v1M539 420v1M539 422v1M540 416v1M540 417v1M540 418v1M540 419v1M540 421v1M540 426v1M541 409v1M541 416v1M541 420v1M541 421v1M542 413v1M542 415v1M542 417v1M542 427v1M543 414v1M543 421v1M543 423v1M543 424v1M544 412v1M544 414v1M544 415v1M544 416v1M544 418v1M544 420v1M544 422v1M544 424v1M545 413v1M545 415v1M545 416v1M545 417v1M545 418v1M545 419v1M545 420v1M546 415v1M546 424v1M547 415v1M547 417v1M547 419v1M547 420v1M547 425v1M548 413v1M548 414v1M548 415v1M548 417v1M548 420v1M548 421v1M549 412v1M549 416v1M549 418v1M549 420v1M549 421v1M549 423v1M549 424v1M550 414v1M550 416v1M550 417v1M550 419v1M550 420v1M550 423v1M550 426v1M551 418v1M551 419v1M551 420v1M551 421v1M551 422v1M552 418v1M552 422v1M552 423v1M553 420v1M553 423v1M553 425v1M554 413v1M554 417v1M554 419v1M555 415v1M555 418v1M555 420v1M555 421v1M555 422v1M555 423v1M556 418v1M556 421v1M556 422v1M556 431v1M557 420v1M557 421v1M557 423v1M557 425v1M557 426v1M558 416v1M558 418v1M558 420v1M558 422v1M558 425v1M558 430v1M559 420v1M559 424v1M559 426v1M560 420v1M560 421v1M560 422v1M560 423v1M560 424v1M561 418v1M561 419v1M561 421v1M561 422v1M561 423v1M561 424v1M561 425v1M562 417v1M562 419v1M562 424v1M563 419v1M563 424v1M564 416v1M564 417v1M564 420v1M564 422v1M564 423v1M564 426v1M565 418v1M565 422v1M565 423v1M565 424v1M566 413v1M566 420v1M566 424v1M566 426v1M566 429v1M567 422v1M567 424v1M567 425v1M568 417v1M568 420v1M568 421v1M568 423v1M568 425v1M568 428v1M569 413v1M569 419v1M569 421v1M569 422v1M569 423v1M569 425v1M569 426v1M569 427v1M569 432v1M570 421v1M570 423v1M570 426v1M571 419v1M571 420v1M571 422v1M571 424v1M571 428v1M572 423v1M572 425v1M572 427v1M572 431v1M573 418v1M573 419v1M573 425v1M573 426v1M573 428v1M574 417v1M574 422v1M574 423v1M574 424v1M574 425v1M574 426v1M575 420v1M575 422v1M575 424v1M575 425v1M575 426v1M575 428v1M576 421v1M576 426v1M576 428v1M577 423v1M577 425v1M577 426v1M577 427v1M577 429v1M578 417v1M578 421v1M578 424v1M579 419v1M579 420v1M579 424v1M579 425v1M579 426v1M579 427v1M580 423v1M580 424v1M580 427v1M581 417v1M581 427v1M581 428v1M581 432v1M582 421v1M582 424v1M582 426v1M582 428v1M582 429v1M582 432v1M583 419v1M583 420v1M583 422v1M583 424v1M583 426v1M583 427v1M584 423v1M584 424v1M584 425v1M585 417v1M585 424v1M585 430v1M586 422v1M586 424v1M586 425v1M586 426v1M586 427v1M587 425v1M587 426v1M587 429v1M588 418v1M588 420v1M588 421v1M588 422v1M588 423v1M588 428v1M589 422v1M589 427v1M589 428v1M589 429v1M590 419v1M590 424v1M590 425v1M590 426v1M590 427v1M590 428v1M590 429v1M590 432v1M591 423v1M591 427v1M592 422v1M592 423v1M592 424v1M592 428v1M593 418v1M593 424v1M593 426v1M593 429v1M593 430v1M594 420v1M594 423v1M594 424v1M594 426v1M594 432v1M595 424v1M595 426v1M596 415v1M596 420v1M596 424v1M596 426v1M596 430v1M596 431v1M597 420v1M597 424v1M597 425v1M597 426v1M597 427v1M597 430v1M597 432v1M598 423v1M598 425v1M598 429v1M598 430v1M598 434v1M599 423v1M599 426v1M599 427v1M599 429v1M599 430v1M599 431v1M600 423v1M600 426v1M600 428v1M600 434v1M601 426v1M601 430v1M602 422v1M602 425v1M602 427v1M602 432v1M603 424v1M603 425v1M603 428v1M603 433v1M604 425v1M604 431v1M605 422v1M605 424v1M605 425v1M605 427v1M605 428v1M605 430v1M605 431v1M606 424v1M606 425v1M606 429v1M606 431v1M606 432v1M607 426v1M607 427v1M608 424v1M608 425v1M608 426v1M608 430v1M609 427v1M609 429v1M610 425v1M610 426v1M610 428v1M610 430v1M611 423v1M611 425v1M611 429v1M611 433v1M611 435v1M611 436v1M612 425v1M612 427v1M612 428v1M612 431v1M612 434v1M613 425v1M613 426v1M613 427v1M613 429v1M614 422v1M614 424v1M614 425v1M614 426v1M614 428v1M614 430v1M615 423v1M615 424v1M615 425v1M615 430v1M615 438v1M616 425v1M616 427v1M616 428v1M616 429v1M616 435v1M617 424v1M617 426v1M617 429v1M617 432v1M618 426v1M618 427v1M618 428v1M618 429v1M619 420v1M619 423v1M619 427v1M619 428v1M619 431v1M619 433v1M620 425v1M620 426v1M620 427v1M620 428v1M620 433v1M621 426v1M621 428v1M621 429v1M621 430v1M621 431v1M622 426v1M622 427v1M622 428v1M622 430v1M622 431v1M622 432v1M622 433v1M622 434v1M623 424v1M623 425v1M623 426v1M623 428v1M624 421v1M624 424v1M624 427v1M624 428v1M624 429v1M625 421v1M625 423v1M625 424v1M625 425v1M625 426v1M625 428v1M625 429v1M626 432v1M626 435v1M626 436v1M627 426v1M628 423v1M628 424v1M628 426v1M628 428v1M628 430v1M628 431v1M628 432v1M629 422v1M629 428v1M629 429v1M629 432v1M629 435v1M630 423v1M630 429v1M630 430v1M630 436v1M631 423v1M631 426v1M631 427v1M631 428v1M631 431v1M632 425v1M632 426v1M632 429v1M632 430v1M632 431v1M632 432v1M633 424v1M633 426v1M633 427v1M633 428v1M633 429v1M633 430v1M633 431v1M634 424v1M634 425v1M634 429v1M634 430v1M634 431v1M635 428v1M635 429v1M635 430v1M635 432v1M635 434v1M636 428v1M636 430v1M636 431v1M636 432v1M637 424v1M637 426v1M637 428v1M637 429v1M637 431v1M638 426v1M638 429v1M638 431v1M638 432v1M638 434v1M639 425v1M639 427v1M639 429v1M640 424v1M640 429v1M640 430v1M640 433v1M640 435v1M640 436v1M640 438v1M641 427v1M641 433v1M642 420v1M642 422v1M642 425v1M642 428v1M642 429v1M642 431v1M642 432v1M642 436v1M643 424v1M643 425v1M643 427v1M643 431v1M643 432v1M644 424v1M644 429v1M644 430v1M644 431v1M644 432v1M644 433v1M644 434v1M645 427v1M645 430v1M645 431v1M645 433v1M645 436v1M646 427v1M646 430v1M646 431v1M647 426v1M647 429v1M647 434v1M648 427v1M648 429v1M649 427v1M649 429v1M649 430v1M649 432v1M650 429v1M650 430v1M650 432v1M650 433v1M650 434v1M651 426v1M651 427v1M651 428v1M651 429v1M651 431v1M651 432v1M651 433v1M652 429v1M652 431v1M652 432v1M652 433v1M653 427v1M653 428v1M653 429v1M653 430v1M653 434v1M654 427v1M654 430v1M654 431v1M655 430v1M655 434v1M655 435v1M656 428v1M656 431v1M656 432v1M656 433v1M657 426v1M657 428v1M657 429v1M657 430v1M657 432v1M657 434v1M657 436v1M658 430v1M658 431v1M658 432v1M659 425v1M659 430v1M659 431v1M659 432v1M659 436v1M660 428v1M660 429v1M660 431v1M660 433v1M660 435v1M661 422v1M661 428v1M661 430v1M661 431v1M661 432v1M661 438v1M662 426v1M662 429v1M662 432v1M662 433v1M662 437v1M663 421v1M663 424v1M663 427v1M663 429v1M663 433v1M663 435v1M663 438v1M664 428v1M664 429v1M664 430v1M664 433v1M665 428v1M665 433v1M665 436v1M666 425v1M666 428v1M666 431v1M666 435v1M667 428v1M667 431v1M667 433v1M667 434v1M667 435v1M667 438v1M668 429v1M668 434v1M669 426v1M669 427v1M669 430v1M669 431v1M669 432v1M669 434v1M669 435v1M670 429v1M670 431v1M670 432v1M670 433v1M671 423v1M671 429v1M671 430v1M671 432v1M671 433v1M671 435v1M672 425v1M672 428v1M672 430v1M672 433v1M672 436v1M673 428v1M673 430v1M673 432v1M673 433v1M673 434v1M674 428v1M674 436v1M675 426v1M675 428v1M675 431v1M675 432v1M675 434v1M675 435v1M675 438v1M676 426v1M676 428v1M676 430v1M676 433v1M677 428v1M677 430v1M677 432v1M677 433v1M677 434v1M678 428v1M678 430v1M678 432v1M678 434v1M679 430v1M679 431v1M679 432v1M679 434v1M679 435v1M679 436v1M680 426v1M680 427v1M680 430v1M680 431v1M680 433v1M680 436v1M680 438v1M681 430v1M681 431v1M681 437v1M682 427v1M682 430v1M682 432v1M682 433v1M682 435v1M683 431v1M683 432v1M683 435v1M684 429v1M684 431v1M684 435v1M684 436v1M684 438v1M685 430v1M685 432v1M685 433v1M686 430v1M686 431v1M686 434v1M686 438v1M687 430v1M687 435v1M687 437v1M688 429v1M688 430v1M688 432v1M688 433v1M689 430v1M689 431v1M689 432v1M689 433v1M689 435v1M689 436v1M690 430v1M690 431v1M690 432v1M690 433v1M690 434v1M690 436v1M690 437v1M691 427v1M691 432v1M692 426v1M692 434v1M692 435v1M693 429v1M693 431v1M693 432v1M693 436v1M694 427v1M694 429v1M694 436v1M695 425v1M695 431v1M695 432v1M695 435v1M695 436v1M696 429v1M696 430v1M696 432v1M696 434v1M697 425v1M697 434v1M698 427v1M698 428v1M698 430v1M698 433v1M698 434v1M698 435v1M698 437v1M699 428v1M699 430v1M699 433v1M699 436v1M700 429v1M700 430v1M700 431v1M700 432v1M700 433v1M700 434v1M700 437v1M701 431v1M701 432v1M701 433v1M702 429v1M702 431v1M702 432v1M702 433v1M702 437v1M702 438v1M703 435v1M704 427v1M704 431v1M704 437v1M705 427v1M705 430v1M705 432v1M705 433v1M705 434v1M705 437v1M705 438v1M706 431v1M707 435v1M708 429v1M708 431v1M708 432v1M709 430v1M709 431v1M709 434v1M709 436v1M710 425v1M710 429v1M710 432v1M710 434v1M711 428v1M711 432v1M712 428v1M712 431v1M712 434v1M713 432v1M713 433v1M713 435v1M713 436v1M714 429v1M714 431v1M714 433v1M714 434v1M715 432v1M715 436v1M716 435v1M717 430v1M717 431v1M717 433v1M717 435v1M718 428v1M718 433v1M718 434v1M719 431v1M719 433v1M719 438v1M720 432v1M721 431v1M721 436v1M722 432v1M722 436v1M722 437v1M723 430v1M724 437v1M725 435v1M725 437v1M725 438v1M726 429v1M726 431v1M726 434v1M726 435v1M727 429v1M727 433v1M728 432v1M728 434v1M728 438v1M729 430v1M729 432v1M730 431v1M730 432v1M730 435v1M730 436v1M731 429v1M731 431v1M731 434v1M732 430v1M732 433v1M732 437v1M733 431v1M733 432v1M733 435v1M734 427v1M734 429v1M734 432v1M735 435v1M735 438v1M736 431v1M736 432v1M736 434v1M737 433v1M737 434v1M737 435v1M737 436v1M739 433v1M739 434v1M740 427v1M740 431v1M741 432v1M741 433v1M741 434v1M741 435v1M741 438v1M742 428v1M742 437v1M743 428v1M743 431v1M744 437v1M745 426v1M745 429v1M746 430v1M746 431v1M746 432v1M747 429v1M747 433v1M748 430v1M748 431v1M748 436v1M749 429v1M749 436v1M750 436v1M751 438v1M752 435v1M753 428v1M753 433v1M756 434v1M757 427v1M758 437v1M759 433v1M759 436v1M760 436v1M766 430v1" stroke="#2fd02f" stroke-width="1" transform="translate(0.5,0)"/><path d="M500 378v3M501 379v4M502 382v4M503 381v4M504 383v4M505 383v4M505 389v1M506 383v3M506 380v1M507 383v3M508 382v4M509 383v3M510 383v5M511 384v4M512 384v3M513 385v4M513 383v1M514 386v4M515 384v4M516 385v4M516 391v1M517 384v4M518 386v3M519 385v4M519 390v1M520 385v4M521 386v4M522 387v3M523 385v4M524 387v3M525 387v4M526 386v4M527 385v4M528 387v5M529 388v4M530 388v3M531 389v4M532 389v4M533 389v4M534 387v4M535 388v4M535 393v1M536 387v4M537 390v3M538 388v4M539 388v3M540 388v4M541 387v3M542 390v3M543 388v4M544 391v3M545 389v4M546 389v3M547 389v4M547 395v1M548 390v4M549 390v3M549 387v1M550 393v4M551 393v4M551 390v1M552 391v4M553 394v5M554 391v4M555 392v4M556 392v3M557 391v4M558 395v3M559 392v5M560 392v3M561 393v4M562 394v3M563 393v4M564 393v3M565 394v5M566 393v3M566 397v1M567 394v4M567 400v1M568 394v3M569 395v4M570 395v3M571 394v4M572 394v3M572 398v1M573 396v3M573 393v1M574 397v4M575 395v3M576 394v4M577 395v4M578 394v4M579 393v4M580 393v4M581 394v4M582 394v4M583 391v3M583 389v1M584 393v3M584 397v1M585 394v3M585 391v1M586 392v4M586 398v1M587 393v3M588 394v4M588 400v1M589 394v4M590 395v4M591 394v3M592 393v4M593 395v4M594 393v3M594 391v1M595 393v5M596 394v4M597 396v4M597 393v1M598 395v3M598 400v1M599 394v4M600 394v4M601 396v5M602 394v4M603 394v3M604 395v4M604 401v1M605 396v3M606 396v3M607 399v4M607 405v1M608 398v4M609 396v3M609 394v1M610 397v5M610 404v1M611 399v4M611 404v1M612 398v4M612 396v1M613 400v3M614 400v4M615 398v4M616 400v5M617 399v3M618 398v5M619 401v3M620 400v4M621 400v3M622 401v3M623 400v3M623 405v1M624 401v3M624 398v1M625 402v3M625 400v1M626 400v4M627 401v5M628 400v3M628 405v1M629 399v4M630 401v4M630 407v1M631 402v3M632 401v3M633 402v4M634 400v4M635 403v5M635 401v1M636 402v4M637 400v5M637 406v1M638 401v4M639 402v5M640 403v4M640 409v1M641 401v4M642 404v4M643 404v3M643 409v1M644 404v4M645 403v4M646 405v3M646 410v1M647 404v3M647 401v1M648 402v4M649 405v4M650 405v4M651 405v3M652 405v3M652 402v1M653 406v4M654 407v3M655 404v4M655 402v1M656 406v3M656 404v1M657 405v3M658 402v4M659 403v3M659 400v1M660 403v3M661 402v5M661 408v1M662 401v3M663 401v4M663 399v1M664 403v3M665 401v3M666 403v3M667 404v3M667 409v1M668 401v3M669 404v4M670 404v3M670 408v1M671 401v4M672 403v3M672 401v1M673 402v3M674 401v4M675 402v4M675 407v1M676 403v4M677 403v5M678 402v4M679 401v3M680 404v3M681 402v3M681 399v1M682 403v4M683 402v3M684 403v3M685 402v3M686 403v5M687 402v3M687 407v1M688 403v3M689 404v4M690 405v3M690 410v1M691 404v3M691 408v1M692 403v4M693 404v3M694 404v4M694 402v1M695 402v4M696 403v3M696 408v1M697 404v4M697 401v1M698 404v4M699 404v4M699 410v1M700 405v3M701 404v5M701 411v1M702 406v3M703 402v4M704 405v4M704 402v1M705 403v4M706 402v3M707 406v4M708 404v4M708 410v1M709 404v4M709 402v1M710 405v4M711 404v4M712 407v5M713 405v4M714 407v3M714 412v1M715 404v4M716 403v4M717 404v3M717 409v1M718 406v4M718 403v1M719 405v4M720 407v5M721 406v4M722 405v3M723 407v3M723 405v1M724 406v4M724 411v1M725 406v3M726 406v4M727 407v4M727 404v1M728 406v3M728 404v1M729 408v4M730 406v4M731 408v4M731 405v1M732 405v5M733 406v3M734 407v4M735 407v4M736 407v3M736 412v1M737 406v4M738 409v3M739 405v4M740 409v3M741 407v3M742 407v4M743 408v4M744 410v4M745 412v5M746 408v3M746 405v1M747 409v4M748 410v4M749 411v4M750 411v3M750 415v1M751 411v3M751 416v1M752 412v4M753 413v3M754 411v5M754 409v1M755 417v3M756 414v4M756 419v1M757 416v3M758 416v5M758 414v1M759 416v4M760 415v3M761 416v4M762 414v3M763 416v4M763 422v1M764 414v3M765 415v4M766 413v4M767 415v3M768 414v3M769 415v4M770 413v3M771 415v3M771 413v1M772 414v3M773 416v3M774 415v4M775 414v4M776 415v3M777 415v3M778 415v3M779 414v3M779 419v1M780 414v4M781 414v5M782 415v4M783 415v5M784 417v3M784 415v1M785 415v3M786 415v4M787 418v4M787 423v1M788 416v4M788 413v1M789 416v4M790 417v4M791 415v3M792 415v3M792 420v1M793 415v3M793 419v1M794 417v4M795 418v5M795 425v1M796 415v4M796 412v1M797 418v4M798 418v3M799 417v3M800 419v4M801 416v3M802 418v4M803 419v4M804 418v3M804 422v1M805 418v4M806 420v3M807 419v3M808 419v3M809 421v3M810 422v3M811 421v3M811 426v1M812 422v4M812 427v1M813 423v2M813 426v2M814 429v2M814 432v2M814 435v2M814 436v3M815 436v3M816 436v3M817 436v3" stroke="#f0f032" stroke-width="1" transform="translate(0.5,0)"/></svg><div class="a" style="left:7px;top:152px;width:348px;height:90px;background:#0a0a18;border:4px solid;border-color:#7e7e7e #c6c6c6 #c6c6c6 #7e7e7e"></div><div class="a" style="left:11px;top:197px;width:340px;height:1px;background:#3c64c0;"></div><div class="a" style="left:11px;top:194px;width:6px;height:6px;background:#fff;"></div><div class="a" style="left:345px;top:194px;width:6px;height:6px;background:#fff;"></div><span class="t" style="left:359px;top:157px;">大</span><span class="t" style="left:359px;top:228px;">小</span><div class="grp" style="left:365px;top:34px;width:154px;height:115px"></div><div class="a" style="left:372px;top:27px;width:30px;height:14px;background:#f0f0f0;"></div><span class="t" style="left:374px;top:28px;">采样</span><div class="btn" style="left:375px;top:46px;width:135px;height:21px;"><span style="position:relative;top:2px">加载采样</span></div><div class="btn" style="left:375px;top:72px;width:135px;height:21px;"><span style="position:relative;top:2px">保存采样</span></div><div class="btn" style="left:375px;top:97px;width:135px;height:21px;border-color:#000;box-shadow:inset 1px 1px 0 #fff,inset -1px -1px 0 #6e6e6e,inset -2px -2px 0 #a8a8a8;"><span style="position:relative;top:2px">噪音采样</span></div><span class="t" style="left:423px;top:127px;">采样快照</span><div class="inp" style="left:476px;top:124px;width:34px;height:17px">300</div><div class="chk" style="left:6px;top:248px"></div><span class="t" style="left:23px;top:248px;">对数刻度</span><div class="chk" style="left:80px;top:248px"><svg width="11" height="11" style="position:absolute;left:0;top:0"><path d="M2 4V7L4.500 9.500L9 5V2L4.500 6.500Z" fill="#000"/></svg></div><span class="t" style="left:97px;top:248px;">实时更新</span><div class="btn" style="left:156px;top:246px;width:48px;height:23px;"><span style="position:relative;top:3px">平直化</span></div><div class="a" style="left:209px;top:244px;width:146px;height:20px;background:#f0f0f0;border:1px solid;border-color:#8a8a8a #fff #fff #8a8a8a"></div><span class="t" style="left:5px;top:267px;">降噪级别</span><div class="a" style="left:22px;top:283px;width:276px;height:17px;background:#fafafa;background-image:repeating-conic-gradient(#f0f0f0 0% 25%, #ffffff 0% 50%);background-size:2px 2px"></div><div class="btn" style="left:6px;top:283px;width:16px;height:17px"><svg width="12" height="15" style="position:absolute;left:1px;top:0"><path d="M6 4V11L2.5 7.5Z" fill="#000"/></svg></div><div class="btn" style="left:298px;top:283px;width:16px;height:17px"><svg width="12" height="15" style="position:absolute;left:1px;top:0"><path d="M5 4V11L8.5 7.5Z" fill="#000"/></svg></div><div class="btn" style="left:280px;top:283px;width:18px;height:17px"></div><div class="a" style="left:22px;top:280px;width:21px;height:2px;background:#22e022;"></div><div class="a" style="left:22px;top:301px;width:21px;height:2px;background:#22e022;"></div><div class="a" style="left:150px;top:280px;width:22px;height:2px;background:#f4f422;"></div><div class="a" style="left:150px;top:301px;width:22px;height:2px;background:#f4f422;"></div><div class="a" style="left:279px;top:280px;width:21px;height:2px;background:#e81c1c;"></div><div class="a" style="left:279px;top:301px;width:21px;height:2px;background:#e81c1c;"></div><div class="inp" style="left:320px;top:283px;width:37px;height:18px">100</div><span class="t" style="left:6px;top:304px;">低</span><span class="t" style="left:301px;top:304px;">高</span><div class="grp" style="left:6px;top:328px;width:351px;height:97px"></div><div class="a" style="left:12px;top:321px;width:54px;height:14px;background:#f0f0f0;"></div><span class="t" style="left:14px;top:322px;">降噪设置</span><span class="t" style="left:13px;top:346px;word-spacing:1px"><span style="font-family:'Liberation Serif',serif;font-size:11.500px;letter-spacing:0.3px">FFT</span> 大</span><div class="inp" style="left:63px;top:342px;width:73px;height:19px;padding-top:2px">4096</div><div class="btn" style="left:118px;top:344px;width:16px;height:15px"><svg width="10" height="6" style="position:absolute;left:2px;top:4px"><path d="M1 0H9L5 4.5Z" fill="#000"/></svg></div><span class="t" style="left:140px;top:346px;">控制</span><div class="rad on" style="left:13px;top:367px"></div><span class="t" style="left:30px;top:367px;">噪音消除</span><div class="rad" style="left:13px;top:383px"></div><span class="t" style="left:30px;top:383px;">仅保持噪音</span><span class="t" style="left:238px;top:340px;">噪音衰减</span><div class="inp" style="left:293px;top:338px;width:34px;height:17px">40</div><span class="t" style="left:238px;top:361px;">精度因数</span><div class="inp" style="left:293px;top:359px;width:34px;height:17px">7</div><span class="t" style="left:238px;top:382px;">平滑总里</span><div class="inp" style="left:293px;top:380px;width:34px;height:17px">1</div><span class="t" style="left:238px;top:403px;">转换宽度</span><div class="inp" style="left:293px;top:401px;width:34px;height:17px">0</div><span class="t" style="left:332px;top:340px;font-family:'Liberation Serif',serif;font-size:10.500px">dB</span><span class="t" style="left:332px;top:403px;font-family:'Liberation Serif',serif;font-size:10.500px">dB</span><div class="btn" style="left:461px;top:328px;width:60px;height:21px;"><span style="position:relative;top:2px">确定</span></div><div class="btn" style="left:461px;top:354px;width:60px;height:21px;"><span style="position:relative;top:2px">关闭</span></div><div class="btn" style="left:461px;top:379px;width:60px;height:21px;"><span style="position:relative;top:2px">取消</span></div><div class="btn" style="left:461px;top:405px;width:60px;height:21px;"><span style="position:relative;top:2px">帮助</span></div><div class="btn" style="left:392px;top:405px;width:60px;height:21px;"><span style="position:relative;top:2px">预览</span></div><div class="chk" style="left:392px;top:389px;width:12px;height:12px"></div><span class="t" style="left:410px;top:389px;">直通</span></div>
</body></html>
